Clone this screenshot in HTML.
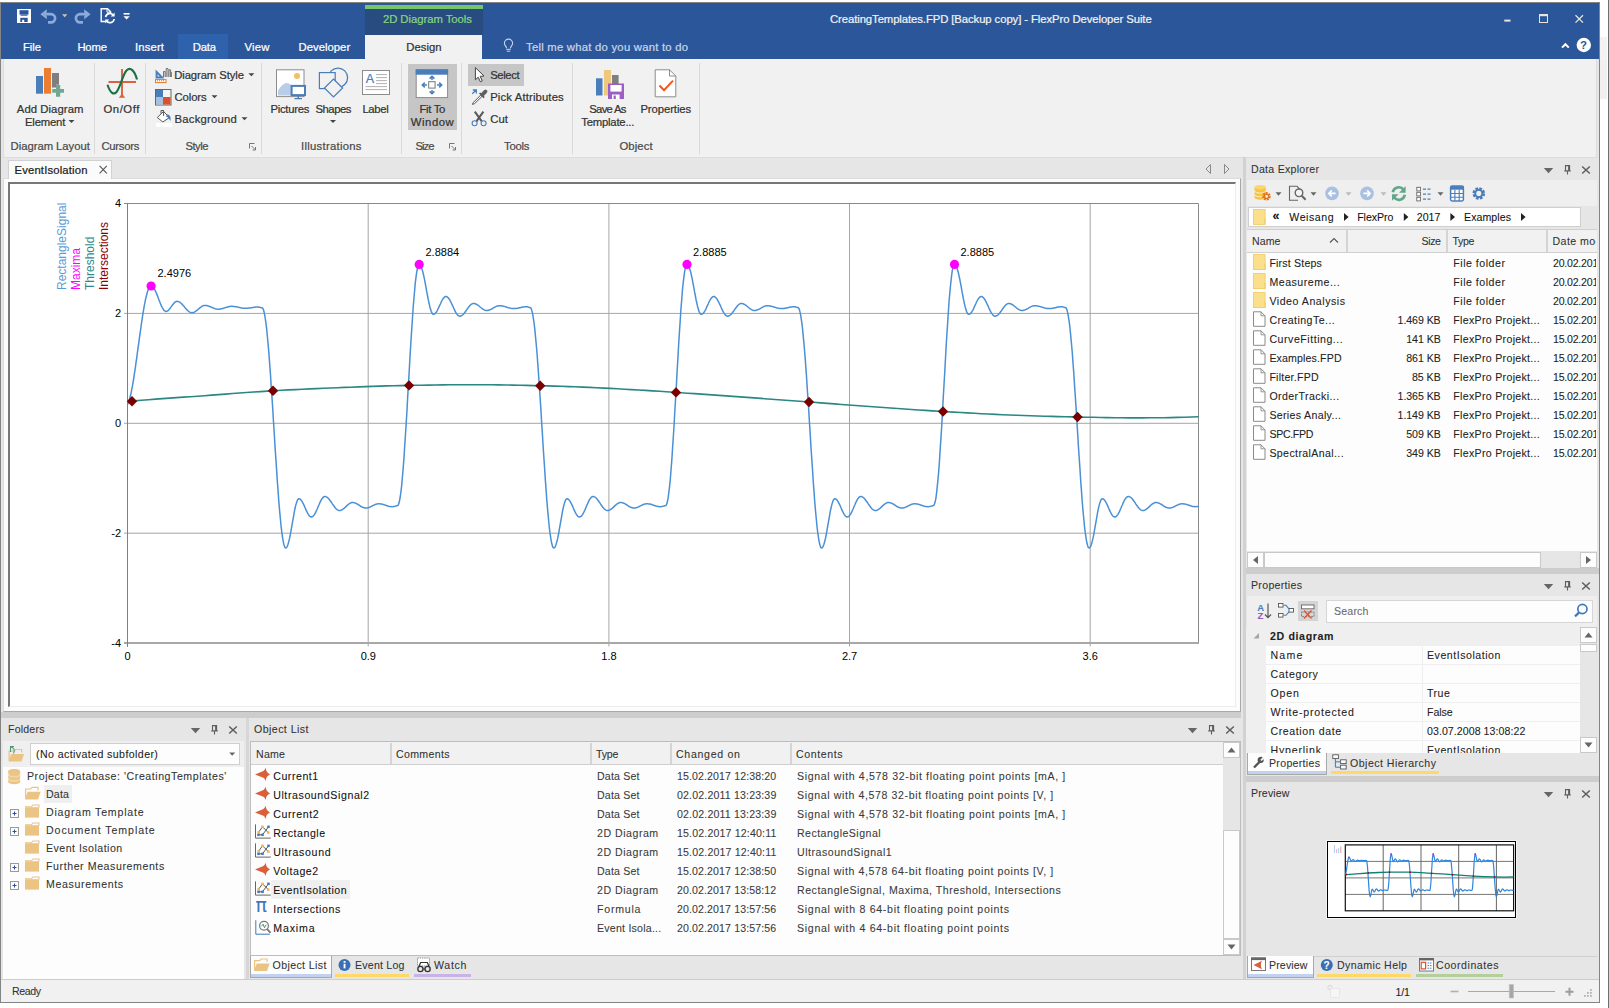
<!DOCTYPE html>
<html><head><meta charset="utf-8"><title>FlexPro</title>
<style>
html,body{margin:0;padding:0;background:#fff;}
body{width:1609px;height:1008px;position:relative;overflow:hidden;font-family:"Liberation Sans",sans-serif;}
.r{position:absolute;display:block;}
.t{position:absolute;white-space:nowrap;line-height:16px;height:16px;display:block;-webkit-text-stroke:0.22px;}
svg{overflow:visible}
</style></head><body>
<div class="r" style="left:0px;top:2px;width:1600px;height:1001px;background:#e6e6e6;border:1px solid #848484;box-sizing:border-box;"></div>
<div class="r" style="left:1px;top:3px;width:1598px;height:56px;background:#2b579a;"></div>
<div class="r" style="left:1600px;top:37px;width:7px;height:23px;background:#f3f3f3;"></div>
<div class="r" style="left:1600px;top:60px;width:7px;height:39px;background:#f0f0f0;"></div>
<div class="r" style="left:1608px;top:0px;width:1px;height:1008px;background:#6e6e6e;"></div>
<div class="r" style="left:365px;top:5px;width:118px;height:4px;background:#76c66c;"></div>
<div class="r" style="left:365px;top:9px;width:118px;height:26px;background:#284b80;"></div>
<div class="r" style="left:365px;top:35px;width:117px;height:24px;background:#f1f1f1;"></div>
<div class="r" style="left:178px;top:34px;width:50px;height:25px;background:#2f62ad;"></div>
<span class="t" style="left:23.0px;top:38.9px;font-size:11.3px;letter-spacing:-0.07px;color:#ffffff;">File</span>
<span class="t" style="left:77.4px;top:38.9px;font-size:11.3px;letter-spacing:-0.18px;color:#ffffff;">Home</span>
<span class="t" style="left:135.0px;top:38.9px;font-size:11.3px;letter-spacing:0.15px;color:#ffffff;">Insert</span>
<span class="t" style="left:192.8px;top:38.9px;font-size:11.3px;letter-spacing:-0.22px;color:#ffffff;">Data</span>
<span class="t" style="left:244.5px;top:38.9px;font-size:11.3px;letter-spacing:0.20px;color:#ffffff;">View</span>
<span class="t" style="left:298.5px;top:38.9px;font-size:11.3px;letter-spacing:0.02px;color:#ffffff;">Developer</span>
<span class="t" style="left:406.3px;top:38.9px;font-size:11.3px;letter-spacing:0.02px;color:#333;">Design</span>
<span class="t" style="left:382.9px;top:11.0px;font-size:11.3px;letter-spacing:-0.04px;color:#86d67c;">2D Diagram Tools</span>
<span class="t" style="left:526.0px;top:38.9px;font-size:11.3px;letter-spacing:0.24px;color:#c9d5ea;">Tell me what do you want to do</span>
<span class="t" style="left:830.0px;top:10.8px;font-size:11.3px;letter-spacing:-0.08px;color:#f2f2f2;">CreatingTemplates.FPD [Backup copy] - FlexPro Developer Suite</span>
<svg class="r" style="left:10px;top:4px;" width="130" height="26" viewBox="10 4 130 26"><rect x="17" y="9" width="14" height="14" fill="#fff"/><rect x="19.5" y="10.2" width="9" height="4.3" fill="#2b579a"/><path d="M20.5 14.5h7v1.2h-7z" fill="#2b579a"/><rect x="20.3" y="17.8" width="7.4" height="4.2" fill="#2b579a"/><rect x="22.2" y="19.8" width="2" height="2.3" fill="#fff"/><path d="M45 14.2H51A4.1 4.1 0 0 1 51 22.4H48" fill="none" stroke="#8eaad8" stroke-width="2.7"/><path d="M40.4 14.2L46.8 9.2V12.4L44.6 14.2L46.8 16V19.2z" fill="#8eaad8"/><path d="M62 14.3h5.4l-2.7 3z" fill="#cfc6b2"/><path d="M86 14.2H80A4.1 4.1 0 0 0 80 22.4H83" fill="none" stroke="#8eaad8" stroke-width="2.7"/><path d="M90.6 14.2L84.2 9.2V12.4L86.4 14.2L84.2 16V19.2z" fill="#8eaad8"/><path d="M105 21.5H101.2V8.7H107.5L110.6 11.8V13" fill="none" stroke="#fff" stroke-width="1.4"/><path d="M107 8.7V12.2H110.6" fill="none" stroke="#fff" stroke-width="1"/><path d="M105.6 17.2A4.3 4.3 0 0 1 113.4 15.4" fill="none" stroke="#fff" stroke-width="1.7"/><path d="M114.6 12.6V16.6H110.6z" fill="#fff"/><path d="M114.2 19A4.3 4.3 0 0 1 106.4 20.8" fill="none" stroke="#fff" stroke-width="1.7"/><path d="M105.2 23.6V19.6H109.2z" fill="#fff"/><rect x="123.6" y="13" width="6" height="1.6" fill="#fff"/><path d="M123.4 16.2h6.4l-3.2 3.2z" fill="#fff"/></svg>
<svg class="r" style="left:500px;top:10px;" width="1099" height="45" viewBox="500 10 1099 45"><rect x="1504.3" y="19.6" width="6.2" height="2" fill="#e9e5dd"/><rect x="1539.5" y="14.5" width="8" height="8" fill="none" stroke="#e9e5dd" stroke-width="1"/><rect x="1539" y="14" width="9" height="2.2" fill="#e9e5dd"/><path d="M1575.5 15.2L1583 22.6M1583 15.2L1575.5 22.6" stroke="#e9e5dd" stroke-width="1.3" fill="none"/><path d="M1562 47.6L1565.4 44.2L1568.8 47.6" stroke="#fff" stroke-width="2" fill="none"/><circle cx="1583.8" cy="45" r="7.2" fill="#fff"/><path d="M506.2 49.3h4.6M506.8 51.2h3.4" stroke="#c9d5ea" stroke-width="1"/><path d="M506.6 48.2C506.4 46.4 504.4 45.6 504.4 43.2A4.1 4.1 0 0 1 512.6 43.2C512.6 45.6 510.6 46.4 510.4 48.2" fill="none" stroke="#c9d5ea" stroke-width="1.1"/></svg>
<span class="t" style="left:1580.1px;top:37.0px;font-size:11.5px;letter-spacing:0.00px;color:#2b579a;font-weight:bold;-webkit-text-stroke:0;">?</span>
<div class="r" style="left:3px;top:59px;width:1594px;height:98.5px;background:#f1f1f1;border:1px solid #dcdcdc;border-top:none;box-sizing:border-box;"></div>
<div class="r" style="left:94px;top:63px;width:1px;height:91px;background:#d9d9d9;"></div>
<div class="r" style="left:145px;top:63px;width:1px;height:91px;background:#d9d9d9;"></div>
<div class="r" style="left:261px;top:63px;width:1px;height:91px;background:#d9d9d9;"></div>
<div class="r" style="left:401px;top:63px;width:1px;height:91px;background:#d9d9d9;"></div>
<div class="r" style="left:461px;top:63px;width:1px;height:91px;background:#d9d9d9;"></div>
<div class="r" style="left:572px;top:63px;width:1px;height:91px;background:#d9d9d9;"></div>
<div class="r" style="left:699px;top:63px;width:1px;height:91px;background:#d9d9d9;"></div>
<span class="t" style="left:10.6px;top:137.8px;font-size:11.3px;letter-spacing:-0.04px;color:#4a4a4a;">Diagram Layout</span>
<span class="t" style="left:101.5px;top:137.8px;font-size:11.3px;letter-spacing:-0.29px;color:#4a4a4a;">Cursors</span>
<span class="t" style="left:185.4px;top:137.8px;font-size:11.3px;letter-spacing:-0.48px;color:#4a4a4a;">Style</span>
<span class="t" style="left:301.0px;top:137.8px;font-size:11.3px;letter-spacing:0.28px;color:#4a4a4a;">Illustrations</span>
<span class="t" style="left:415.6px;top:137.8px;font-size:11.3px;letter-spacing:-1.03px;color:#4a4a4a;">Size</span>
<span class="t" style="left:504.0px;top:137.8px;font-size:11.3px;letter-spacing:-0.27px;color:#4a4a4a;">Tools</span>
<span class="t" style="left:619.4px;top:137.8px;font-size:11.3px;letter-spacing:0.13px;color:#4a4a4a;">Object</span>
<svg class="r" style="left:249px;top:143px;" width="8" height="8" viewBox="249 143 8 8"><path d="M249.5 148.5V143.5H254.5" fill="none" stroke="#777" stroke-width="1"/><path d="M251.5 146l3.5 3.5M255.5 147v3h-3" fill="none" stroke="#777" stroke-width="1"/></svg>
<svg class="r" style="left:449px;top:143px;" width="8" height="8" viewBox="449 143 8 8"><path d="M449.5 148.5V143.5H454.5" fill="none" stroke="#777" stroke-width="1"/><path d="M451.5 146l3.5 3.5M455.5 147v3h-3" fill="none" stroke="#777" stroke-width="1"/></svg>
<div class="r" style="left:408px;top:64px;width:49px;height:66px;background:#c6c6c6;"></div>
<div class="r" style="left:468px;top:64px;width:56px;height:22px;background:#c6c6c6;"></div>
<span class="t" style="left:16.8px;top:101.1px;font-size:11.3px;letter-spacing:0.07px;color:#333;">Add Diagram</span>
<span class="t" style="left:25.0px;top:113.8px;font-size:11.3px;letter-spacing:-0.18px;color:#333;">Element</span>
<span class="t" style="left:103.5px;top:101.1px;font-size:11.3px;letter-spacing:0.54px;color:#333;">On/Off</span>
<span class="t" style="left:174.2px;top:66.8px;font-size:11.3px;letter-spacing:-0.10px;color:#333;">Diagram Style</span>
<span class="t" style="left:174.5px;top:88.9px;font-size:11.3px;letter-spacing:-0.09px;color:#333;">Colors</span>
<span class="t" style="left:174.5px;top:110.9px;font-size:11.3px;letter-spacing:0.23px;color:#333;">Background</span>
<span class="t" style="left:270.4px;top:101.1px;font-size:11.3px;letter-spacing:-0.25px;color:#333;">Pictures</span>
<span class="t" style="left:315.4px;top:101.1px;font-size:11.3px;letter-spacing:-0.45px;color:#333;">Shapes</span>
<span class="t" style="left:362.4px;top:101.1px;font-size:11.3px;letter-spacing:-0.34px;color:#333;">Label</span>
<span class="t" style="left:419.4px;top:101.1px;font-size:11.3px;letter-spacing:-0.28px;color:#333;">Fit To</span>
<span class="t" style="left:410.7px;top:113.8px;font-size:11.3px;letter-spacing:0.58px;color:#333;">Window</span>
<span class="t" style="left:490.2px;top:66.8px;font-size:11.3px;letter-spacing:-0.40px;color:#333;">Select</span>
<span class="t" style="left:490.2px;top:88.9px;font-size:11.3px;letter-spacing:0.14px;color:#333;">Pick Attributes</span>
<span class="t" style="left:490.2px;top:110.9px;font-size:11.3px;letter-spacing:0.06px;color:#333;">Cut</span>
<span class="t" style="left:589.2px;top:101.1px;font-size:11.3px;letter-spacing:-0.69px;color:#333;">Save As</span>
<span class="t" style="left:581.2px;top:113.8px;font-size:11.3px;letter-spacing:-0.20px;color:#333;">Template...</span>
<span class="t" style="left:640.4px;top:101.1px;font-size:11.3px;letter-spacing:-0.08px;color:#333;">Properties</span>
<svg class="r" style="left:0px;top:60px;" width="700" height="96" viewBox="0 60 700 96"><path d="M68.5 120.1h6l-3 3z" fill="#444"/><path d="M248.4 73.3h6l-3 3z" fill="#444"/><path d="M211.5 95.3h6l-3 3z" fill="#444"/><path d="M241.5 117.3h6l-3 3z" fill="#444"/><path d="M330 119.9h6l-3 3z" fill="#444"/><rect x="36" y="76" width="7" height="17.7" fill="#4a7ebb"/><rect x="44" y="68" width="7" height="25.7" fill="#ed7d31"/><rect x="52" y="73" width="7" height="14.7" fill="#7f7f7f"/><path d="M52 87.7h4v-3h4v3h0v6h-8z" fill="#f1f1f1"/><path d="M56 85h4.2v4H64v3.8h-3.8v4H56v-4h-3.8V89H56z" fill="#6fa794"/><path d="M108.5 82H136M122 69V95" stroke="#dc6141" stroke-width="1.9" fill="none"/><path d="M118.8 97.8h6.4l-3.2-4.2z" fill="#dc6141"/><path d="M107.5 84.8C110 92.5 113.5 95.5 116.5 92C120.5 87 122.5 75 126.5 70.5C130.5 66.5 134.5 70.5 137 79.5" fill="none" stroke="#1e7145" stroke-width="2.1"/><path d="M155.6 69.5V78.4H164.5zM157.6 74.3V76.4H159.7z" fill="#4a7ebb" fill-rule="evenodd"/><path d="M163.5 77V71.5h1.6V77M166.2 77V68.5h1.8V77M169 77V69.8h1.6V77M171.4 77V72h0" fill="none" stroke="#666" stroke-width="0.9"/><rect x="155.5" y="79.6" width="10.5" height="3" fill="#fff" stroke="#e87722" stroke-width="1"/><path d="M157.5 80v1.4M159.5 80v1.4M161.5 80v1.4M163.5 80v1.4" stroke="#e87722" stroke-width="0.8"/><rect x="155.5" y="89.5" width="15.5" height="15.5" fill="#f4f4f4" stroke="#666" stroke-width="1"/><rect x="156" y="90" width="7" height="7" fill="#4a7ebb"/><rect x="156" y="97" width="7" height="7.5" fill="#a6c0de"/><rect x="163" y="97" width="7.5" height="7.5" fill="#d9522c"/><rect x="156" y="123" width="16" height="4" fill="#fff"/><path d="M157.3 117.5L163.5 111.5L169.5 117.5L162.8 122z" fill="#fff" stroke="#555" stroke-width="1"/><path d="M161 113.5V110.5h2.6V116" fill="none" stroke="#555" stroke-width="1"/><path d="M167 114.5C170 114.5 171.2 117 170.4 121C169 119 168.5 117.5 166 116.5z" fill="#4a7ebb"/><rect x="276.5" y="69.8" width="27.5" height="26.8" fill="#fff" stroke="#8c8c8c" stroke-width="1"/><circle cx="297" cy="76" r="3" fill="#f2c162"/><path d="M278 95.5V90.5C281 85.5 284 83 286.5 83C289 83 291.5 85 292 87V95.5z" fill="#b9cde8"/><rect x="291.6" y="85.9" width="13.4" height="9.2" fill="#fff" stroke="#4a7ebb" stroke-width="2"/><path d="M298.3 96V98.4M294.5 98.6H302" stroke="#4a7ebb" stroke-width="1.4"/><circle cx="338" cy="77.7" r="9.6" fill="#f1f1f1" stroke="#4a7ebb" stroke-width="1.3"/><rect x="319.4" y="72.6" width="15.8" height="16" fill="#f1f1f1" stroke="#4a7ebb" stroke-width="1.2"/><path d="M333.5 79L342.6 88L333.5 97L324.4 88z" fill="#f1f1f1" stroke="#4a7ebb" stroke-width="1.2"/><rect x="362.5" y="70.5" width="27" height="24" fill="#fff" stroke="#8c8c8c" stroke-width="1"/><path d="M376 74.6h11M376 77.6h11M376 80.6h11M376 83.6h11M365.5 86.6h21.5M365.5 89.6h21.5" stroke="#a8a8a8" stroke-width="0.9"/><rect x="416.2" y="69.8" width="31.4" height="27.8" fill="#fff" stroke="#8c8c8c" stroke-width="1"/><rect x="415.7" y="69.3" width="32.4" height="5.4" fill="#4a7ebb"/><rect x="428.7" y="81.7" width="6.4" height="6.4" fill="#fff" stroke="#777" stroke-width="1"/><path d="M432 80V76.5M429.6 78.6L432 76.2L434.4 78.6M432 90V93.5M429.6 91.4L432 93.8L434.4 91.4M427 85H422.5M424.8 82.6L422.3 85L424.8 87.4M437 85H441.5M439.2 82.6L441.7 85L439.2 87.4" fill="none" stroke="#4a7ebb" stroke-width="1.5"/><path d="M475.4 67.6V79.8L478.2 77.2L480.4 81.8L482.3 80.9L480.2 76.4L484 76z" fill="#fff" stroke="#444" stroke-width="1"/><path d="M481.2 94.6L473.4 102.4L472.4 104.4L474.6 103.6L482.6 95.8z" fill="#fff" stroke="#555" stroke-width="1"/><path d="M479.6 93L484.2 97.6" stroke="#555" stroke-width="1.6"/><path d="M482.4 94.6L485.4 91.6" stroke="#606060" stroke-width="3.8" stroke-linecap="round"/><path d="M472.2 93.8L476 90.2M472.8 90h3.5v3.5" fill="none" stroke="#4a7ebb" stroke-width="1.3"/><path d="M474.8 111.6L481.8 121.4M483.4 111.6L476.4 121.4" stroke="#585858" stroke-width="2"/><circle cx="474.6" cy="123.3" r="2.5" fill="none" stroke="#4a7ebb" stroke-width="1.1"/><circle cx="483.6" cy="123.3" r="2.5" fill="none" stroke="#4a7ebb" stroke-width="1.1"/><rect x="596" y="78.3" width="6.5" height="17.2" fill="#4a7ebb"/><rect x="604" y="70" width="7" height="25.5" fill="#efc77f"/><rect x="612" y="75" width="6.6" height="9" fill="#7f7f7f"/><rect x="608" y="83.5" width="16" height="15.5" fill="#9b5fc4"/><rect x="610.4" y="85" width="11.2" height="6.6" fill="#fff"/><rect x="612" y="94.5" width="7.6" height="4.5" fill="#fff"/><rect x="613.6" y="95.5" width="2.2" height="3.5" fill="#9b5fc4"/><path d="M655.2 69.8H669.5L675.8 76V96.8H655.2z" fill="#fff" stroke="#8c8c8c" stroke-width="1"/><path d="M669.5 69.8V76H675.8" fill="none" stroke="#8c8c8c" stroke-width="1"/><path d="M659.5 85.5L664 90.2L673 80.6" fill="none" stroke="#f05a1e" stroke-width="2"/></svg>
<span class="t" style="left:365.8px;top:70.5px;font-size:12.5px;letter-spacing:0.00px;color:#4a7ebb;">A</span>
<div class="r" style="left:1px;top:712px;width:1240px;height:6px;background:#cdcdcd;"></div>
<div class="r" style="left:1243px;top:157px;width:3px;height:822px;background:#d2d2d2;"></div>
<div class="r" style="left:246px;top:718px;width:3px;height:261px;background:#d6d6d6;"></div>
<div class="r" style="left:3px;top:178px;width:1238px;height:534px;background:#fcfcfc;border:1px solid #a8a8a8;border-top-color:#dcdcdc;border-left-color:#dcdcdc;box-sizing:border-box;"></div>
<div class="r" style="left:8px;top:160px;width:104px;height:19px;background:#fbfbfb;border:1px solid #d2d2d2;border-bottom:none;box-sizing:border-box;"></div>
<span class="t" style="left:14.5px;top:161.6px;font-size:11.3px;letter-spacing:0.15px;color:#222;">EventIsolation</span>
<div class="r" style="left:8px;top:182px;width:1228px;height:525px;background:#fff;border-left:2px solid #777;border-top:2px solid #777;border-right:1px solid #ececec;border-bottom:1px solid #ececec;box-sizing:border-box;"></div>
<svg class="r" style="left:90px;top:160px;" width="1150" height="18" viewBox="90 160 1150 18"><path d="M99.6 165.9L106.8 173.3M106.8 165.9L99.6 173.3" stroke="#555" stroke-width="1.1"/><path d="M1210.5 164.5V173.5L1206 169z" fill="none" stroke="#888" stroke-width="1"/><path d="M1224.5 164.5V173.5L1229 169z" fill="none" stroke="#888" stroke-width="1"/></svg>
<svg class="r" style="left:11px;top:184px;" width="1224" height="522" viewBox="11 184 1224 522"><path d="M124 313.4H1198" stroke="#a6a6a6" stroke-width="1"/><path d="M124 423.3H1198" stroke="#a6a6a6" stroke-width="1"/><path d="M124 533.2H1198" stroke="#a6a6a6" stroke-width="1"/><path d="M368.2 203V646.5" stroke="#a6a6a6" stroke-width="1"/><path d="M608.9 203V646.5" stroke="#a6a6a6" stroke-width="1"/><path d="M849.5 203V646.5" stroke="#a6a6a6" stroke-width="1"/><path d="M1090.2 203V646.5" stroke="#a6a6a6" stroke-width="1"/><path d="M124 203.5H1198.5V643" fill="none" stroke="#8a8a8a" stroke-width="1"/><path d="M124 643H1199" stroke="#a8a8a8" stroke-width="2"/><path d="M127.5 203V647" stroke="#808080" stroke-width="1"/><path id="thr" d="M127.5,401.8 L134.5,400.9 L141.5,400.3 L148.5,399.7 L155.5,399.1 L162.5,398.6 L169.5,398.1 L176.5,397.6 L183.5,397.1 L190.5,396.7 L197.5,396.2 L204.5,395.7 L211.5,395.1 L218.5,394.6 L225.5,394.1 L232.5,393.5 L239.5,393.0 L246.5,392.5 L253.5,392.0 L260.5,391.6 L267.5,391.1 L274.5,390.7 L281.5,390.3 L288.5,389.9 L295.5,389.6 L302.5,389.2 L309.5,388.9 L316.5,388.6 L323.5,388.3 L330.5,388.0 L337.5,387.7 L344.5,387.4 L351.5,387.2 L358.5,386.9 L365.5,386.6 L372.5,386.4 L379.5,386.1 L386.5,385.9 L393.5,385.7 L400.5,385.6 L407.5,385.4 L414.5,385.3 L421.5,385.2 L428.5,385.1 L435.5,385.0 L442.5,384.9 L449.5,384.8 L456.5,384.8 L463.5,384.7 L470.5,384.7 L477.5,384.7 L484.5,384.7 L491.5,384.8 L498.5,384.9 L505.5,385.0 L512.5,385.1 L519.5,385.3 L526.5,385.4 L533.5,385.6 L540.5,385.7 L547.5,385.9 L554.5,386.1 L561.5,386.3 L568.5,386.6 L575.5,386.8 L582.5,387.1 L589.5,387.4 L596.5,387.8 L603.5,388.1 L610.5,388.4 L617.5,388.8 L624.5,389.2 L631.5,389.6 L638.5,390.0 L645.5,390.4 L652.5,390.9 L659.5,391.3 L666.5,391.8 L673.5,392.2 L680.5,392.7 L687.5,393.2 L694.5,393.6 L701.5,394.1 L708.5,394.6 L715.5,395.1 L722.5,395.6 L729.5,396.1 L736.5,396.6 L743.5,397.1 L750.5,397.6 L757.5,398.1 L764.5,398.7 L771.5,399.2 L778.5,399.7 L785.5,400.2 L792.5,400.8 L799.5,401.3 L806.5,401.8 L813.5,402.3 L820.5,402.9 L827.5,403.4 L834.5,403.9 L841.5,404.5 L848.5,405.0 L855.5,405.5 L862.5,406.0 L869.5,406.5 L876.5,407.0 L883.5,407.5 L890.5,408.0 L897.5,408.5 L904.5,409.0 L911.5,409.5 L918.5,410.0 L925.5,410.4 L932.5,410.9 L939.5,411.3 L946.5,411.7 L953.5,412.1 L960.5,412.5 L967.5,412.9 L974.5,413.3 L981.5,413.7 L988.5,414.0 L995.5,414.4 L1002.5,414.7 L1009.5,415.0 L1016.5,415.2 L1023.5,415.5 L1030.5,415.7 L1037.5,416.0 L1044.5,416.2 L1051.5,416.4 L1058.5,416.6 L1065.5,416.7 L1072.5,416.9 L1079.5,417.1 L1086.5,417.2 L1093.5,417.3 L1100.5,417.5 L1107.5,417.6 L1114.5,417.7 L1121.5,417.8 L1128.5,417.9 L1135.5,417.9 L1142.5,417.9 L1149.5,417.8 L1156.5,417.8 L1163.5,417.7 L1170.5,417.6 L1177.5,417.4 L1184.5,417.2 L1191.5,417.0 L1198.5,416.8 L1198.5,416.8" fill="none" stroke="#2a8783" stroke-width="1.6"/><path id="sig" d="M127.8,404.2 L128.5,402.4 L129.3,400.2 L130.0,397.5 L130.8,394.3 L131.5,390.8 L132.3,386.8 L133.0,382.6 L133.8,378.0 L134.5,373.1 L135.3,368.0 L136.0,362.7 L136.8,357.3 L137.5,351.8 L138.3,346.2 L139.1,340.7 L139.8,335.2 L140.6,329.8 L141.3,324.5 L142.1,319.4 L142.8,314.5 L143.6,309.9 L144.3,305.7 L145.1,301.7 L145.8,298.2 L146.6,295.0 L147.3,292.3 L148.1,290.1 L148.8,288.3 L149.6,287.0 L150.3,286.3 L151.1,286.0 L151.9,286.2 L152.7,286.7 L153.5,287.5 L154.2,288.7 L155.0,290.1 L155.8,291.8 L156.6,293.6 L157.4,295.6 L158.2,297.7 L158.9,299.7 L159.7,301.8 L160.5,303.8 L161.3,305.6 L162.1,307.3 L162.9,308.7 L163.6,309.9 L164.4,310.7 L165.2,311.2 L166.0,311.4 L166.8,311.3 L167.6,310.9 L168.4,310.3 L169.1,309.5 L169.9,308.5 L170.7,307.5 L171.5,306.4 L172.3,305.2 L173.1,304.2 L173.9,303.2 L174.6,302.4 L175.4,301.8 L176.2,301.4 L177.0,301.3 L177.8,301.4 L178.5,301.6 L179.2,301.9 L180.0,302.4 L180.8,303.0 L181.5,303.6 L182.2,304.4 L183.0,305.2 L183.8,306.1 L184.5,307.0 L185.2,307.9 L186.0,308.8 L186.8,309.6 L187.5,310.4 L188.2,311.0 L189.0,311.6 L189.8,312.1 L190.5,312.4 L191.2,312.6 L192.0,312.7 L192.8,312.6 L193.5,312.5 L194.3,312.2 L195.1,311.7 L195.8,311.2 L196.6,310.7 L197.4,310.0 L198.1,309.4 L198.9,308.7 L199.6,308.1 L200.4,307.4 L201.2,306.9 L201.9,306.4 L202.7,305.9 L203.5,305.6 L204.2,305.5 L205.0,305.4 L205.8,305.4 L206.6,305.5 L207.4,305.7 L208.2,305.9 L208.9,306.2 L209.7,306.5 L210.5,306.8 L211.3,307.1 L212.1,307.5 L212.9,307.8 L213.7,308.1 L214.5,308.4 L215.2,308.7 L216.0,308.9 L216.8,309.1 L217.6,309.2 L218.4,309.2 L219.2,309.2 L220.0,309.1 L220.7,309.0 L221.5,308.8 L222.3,308.6 L223.1,308.4 L223.9,308.1 L224.7,307.9 L225.4,307.6 L226.2,307.4 L227.0,307.1 L227.8,306.9 L228.6,306.7 L229.4,306.5 L230.1,306.4 L230.9,306.3 L231.7,306.3 L232.5,306.3 L233.2,306.4 L234.0,306.4 L234.7,306.5 L235.5,306.7 L236.3,306.8 L237.0,307.0 L237.8,307.1 L238.5,307.3 L239.3,307.5 L240.1,307.6 L240.8,307.8 L241.6,307.9 L242.4,308.1 L243.1,308.2 L243.9,308.2 L244.6,308.3 L245.4,308.3 L246.2,308.3 L247.0,308.3 L247.8,308.2 L248.5,308.1 L249.3,308.0 L250.1,307.9 L250.9,307.8 L251.7,307.7 L252.5,307.5 L253.3,307.4 L254.1,307.3 L254.8,307.2 L255.6,307.1 L256.4,307.0 L257.2,307.0 L258.0,307.0 L258.8,307.1 L259.6,307.3 L260.5,307.5 L261.3,307.7 L262.1,307.8 L262.9,308.4 L263.6,310.3 L264.4,313.3 L265.1,317.5 L265.9,322.9 L266.7,329.3 L267.4,336.8 L268.2,345.2 L269.0,354.4 L269.7,364.4 L270.5,375.0 L271.2,386.2 L272.0,397.8 L272.8,409.7 L273.5,421.8 L274.3,434.0 L275.0,446.1 L275.8,458.0 L276.6,469.6 L277.3,480.8 L278.1,491.4 L278.8,501.4 L279.6,510.6 L280.4,519.0 L281.1,526.5 L281.9,532.9 L282.7,538.3 L283.4,542.5 L284.2,545.5 L284.9,547.4 L285.7,548.0 L286.5,547.6 L287.3,546.3 L288.0,544.3 L288.8,541.6 L289.6,538.2 L290.4,534.3 L291.1,530.1 L291.9,525.6 L292.7,521.1 L293.5,516.6 L294.2,512.4 L295.0,508.5 L295.8,505.1 L296.6,502.4 L297.3,500.4 L298.1,499.1 L298.9,498.7 L299.7,498.9 L300.5,499.4 L301.2,500.2 L302.0,501.4 L302.8,502.8 L303.6,504.3 L304.4,506.1 L305.1,507.8 L305.9,509.6 L306.7,511.4 L307.5,512.9 L308.3,514.3 L309.1,515.5 L309.8,516.3 L310.6,516.8 L311.4,517.0 L312.1,516.8 L312.9,516.4 L313.6,515.6 L314.4,514.6 L315.1,513.3 L315.9,511.9 L316.6,510.3 L317.4,508.5 L318.1,506.8 L318.9,505.0 L319.6,503.2 L320.4,501.6 L321.1,500.2 L321.9,498.9 L322.6,497.9 L323.4,497.1 L324.1,496.7 L324.9,496.5 L325.7,496.6 L326.4,496.9 L327.2,497.3 L328.0,498.0 L328.7,498.8 L329.5,499.7 L330.2,500.7 L331.0,501.8 L331.8,502.9 L332.5,504.1 L333.3,505.2 L334.1,506.3 L334.8,507.3 L335.6,508.2 L336.3,509.0 L337.1,509.7 L337.9,510.1 L338.6,510.4 L339.4,510.5 L340.2,510.4 L341.0,510.2 L341.7,509.9 L342.5,509.5 L343.3,508.9 L344.1,508.3 L344.9,507.6 L345.7,506.9 L346.4,506.1 L347.2,505.4 L348.0,504.7 L348.8,504.1 L349.6,503.5 L350.4,503.1 L351.1,502.8 L351.9,502.6 L352.7,502.5 L353.5,502.5 L354.2,502.7 L355.0,502.9 L355.8,503.2 L356.5,503.6 L357.3,504.0 L358.1,504.5 L358.8,505.0 L359.6,505.5 L360.3,506.0 L361.1,506.5 L361.9,506.9 L362.6,507.3 L363.4,507.6 L364.2,507.8 L364.9,508.0 L365.7,508.0 L366.5,508.0 L367.3,507.9 L368.0,507.7 L368.8,507.5 L369.6,507.2 L370.4,506.8 L371.1,506.5 L371.9,506.1 L372.7,505.7 L373.5,505.3 L374.2,505.0 L375.0,504.6 L375.8,504.3 L376.6,504.1 L377.3,503.9 L378.1,503.8 L378.9,503.8 L379.6,503.8 L380.4,503.9 L381.1,504.0 L381.9,504.1 L382.6,504.3 L383.4,504.5 L384.1,504.8 L384.9,505.0 L385.6,505.2 L386.4,505.5 L387.1,505.7 L387.9,506.0 L388.6,506.2 L389.4,506.4 L390.1,506.5 L390.9,506.6 L391.6,506.7 L392.4,506.7 L393.3,506.6 L394.1,506.4 L395.0,506.2 L395.9,505.9 L396.7,505.7 L397.6,505.6 L398.4,504.8 L399.1,502.6 L399.9,498.8 L400.7,493.7 L401.5,487.1 L402.2,479.3 L403.0,470.3 L403.8,460.2 L404.5,449.2 L405.3,437.3 L406.1,424.8 L406.9,411.8 L407.6,398.5 L408.4,385.0 L409.2,371.5 L409.9,358.2 L410.7,345.2 L411.5,332.7 L412.3,320.8 L413.0,309.8 L413.8,299.7 L414.6,290.7 L415.3,282.9 L416.1,276.3 L416.9,271.2 L417.7,267.4 L418.4,265.2 L419.2,264.4 L420.0,264.7 L420.7,265.8 L421.5,267.4 L422.2,269.7 L423.0,272.5 L423.7,275.7 L424.5,279.3 L425.2,283.2 L426.0,287.3 L426.7,291.4 L427.5,295.5 L428.2,299.4 L429.0,303.0 L429.7,306.2 L430.5,309.0 L431.2,311.3 L432.0,312.9 L432.7,314.0 L433.5,314.3 L434.3,314.1 L435.1,313.6 L435.8,312.8 L436.6,311.7 L437.4,310.3 L438.1,308.8 L438.9,307.1 L439.7,305.4 L440.5,303.7 L441.2,302.0 L442.0,300.5 L442.8,299.1 L443.6,298.0 L444.3,297.2 L445.1,296.7 L445.9,296.5 L446.7,296.6 L447.4,297.1 L448.2,297.8 L449.0,298.8 L449.8,300.0 L450.5,301.4 L451.3,303.0 L452.1,304.6 L452.9,306.3 L453.6,308.1 L454.4,309.7 L455.2,311.3 L455.9,312.7 L456.7,313.9 L457.5,314.9 L458.3,315.6 L459.0,316.1 L459.8,316.2 L460.6,316.1 L461.3,315.8 L462.1,315.3 L462.8,314.7 L463.6,313.9 L464.4,313.0 L465.1,312.0 L465.9,311.0 L466.6,309.9 L467.4,308.7 L468.2,307.7 L468.9,306.7 L469.7,305.8 L470.5,305.0 L471.2,304.4 L472.0,303.9 L472.7,303.6 L473.5,303.5 L474.3,303.6 L475.1,303.7 L475.8,304.0 L476.6,304.4 L477.4,304.9 L478.2,305.4 L479.0,306.0 L479.8,306.7 L480.5,307.3 L481.3,308.0 L482.1,308.6 L482.9,309.1 L483.7,309.6 L484.5,310.0 L485.2,310.3 L486.0,310.4 L486.8,310.5 L487.6,310.5 L488.4,310.3 L489.2,310.1 L490.0,309.8 L490.8,309.4 L491.6,309.0 L492.4,308.6 L493.1,308.1 L493.9,307.6 L494.7,307.2 L495.5,306.8 L496.3,306.4 L497.1,306.1 L497.9,305.9 L498.7,305.7 L499.5,305.7 L500.3,305.7 L501.0,305.8 L501.8,305.9 L502.5,306.0 L503.3,306.2 L504.0,306.4 L504.8,306.6 L505.5,306.8 L506.3,307.0 L507.0,307.3 L507.8,307.5 L508.5,307.7 L509.3,307.9 L510.0,308.1 L510.8,308.3 L511.5,308.4 L512.3,308.5 L513.0,308.6 L513.8,308.6 L514.6,308.6 L515.4,308.5 L516.2,308.4 L517.0,308.3 L517.8,308.2 L518.6,308.0 L519.4,307.8 L520.1,307.7 L520.9,307.5 L521.7,307.3 L522.5,307.1 L523.3,307.0 L524.1,306.9 L524.9,306.8 L525.7,306.7 L526.5,306.7 L527.4,306.8 L528.4,307.1 L529.3,307.5 L530.2,307.6 L531.0,308.2 L531.7,310.1 L532.5,313.1 L533.2,317.3 L534.0,322.7 L534.8,329.1 L535.5,336.6 L536.3,345.0 L537.1,354.2 L537.8,364.2 L538.6,374.9 L539.3,386.1 L540.1,397.7 L540.9,409.6 L541.6,421.7 L542.4,433.9 L543.1,446.0 L543.9,457.9 L544.7,469.5 L545.4,480.7 L546.2,491.4 L546.9,501.4 L547.7,510.6 L548.5,519.0 L549.2,526.5 L550.0,532.9 L550.8,538.3 L551.5,542.5 L552.3,545.5 L553.0,547.4 L553.8,548.0 L554.6,547.6 L555.4,546.3 L556.1,544.3 L556.9,541.6 L557.7,538.2 L558.5,534.3 L559.2,530.1 L560.0,525.6 L560.8,521.1 L561.6,516.6 L562.3,512.4 L563.1,508.5 L563.9,505.1 L564.7,502.4 L565.4,500.4 L566.2,499.1 L567.0,498.7 L567.8,498.9 L568.6,499.4 L569.3,500.2 L570.1,501.4 L570.9,502.8 L571.7,504.3 L572.5,506.1 L573.2,507.8 L574.0,509.6 L574.8,511.4 L575.6,512.9 L576.4,514.3 L577.2,515.5 L577.9,516.3 L578.7,516.8 L579.5,517.0 L580.2,516.8 L581.0,516.4 L581.8,515.6 L582.5,514.6 L583.2,513.3 L584.0,511.9 L584.8,510.3 L585.5,508.5 L586.2,506.8 L587.0,505.0 L587.8,503.2 L588.5,501.6 L589.2,500.2 L590.0,498.9 L590.8,497.9 L591.5,497.1 L592.2,496.7 L593.0,496.5 L593.8,496.6 L594.5,496.9 L595.3,497.3 L596.1,498.0 L596.8,498.8 L597.6,499.7 L598.3,500.7 L599.1,501.8 L599.9,502.9 L600.6,504.1 L601.4,505.2 L602.2,506.3 L602.9,507.3 L603.7,508.2 L604.4,509.0 L605.2,509.7 L606.0,510.1 L606.7,510.4 L607.5,510.5 L608.3,510.4 L609.1,510.2 L609.8,509.9 L610.6,509.5 L611.4,508.9 L612.2,508.3 L613.0,507.6 L613.8,506.9 L614.5,506.1 L615.3,505.4 L616.1,504.7 L616.9,504.1 L617.7,503.5 L618.5,503.1 L619.2,502.8 L620.0,502.6 L620.8,502.5 L621.6,502.5 L622.3,502.7 L623.1,502.9 L623.9,503.2 L624.6,503.6 L625.4,504.0 L626.2,504.5 L626.9,505.0 L627.7,505.5 L628.4,506.0 L629.2,506.5 L630.0,506.9 L630.7,507.3 L631.5,507.6 L632.3,507.8 L633.0,508.0 L633.8,508.0 L634.6,508.0 L635.4,507.9 L636.1,507.7 L636.9,507.5 L637.7,507.2 L638.5,506.8 L639.2,506.5 L640.0,506.1 L640.8,505.7 L641.6,505.3 L642.3,505.0 L643.1,504.6 L643.9,504.3 L644.7,504.1 L645.4,503.9 L646.2,503.8 L647.0,503.8 L647.8,503.8 L648.5,503.9 L649.2,504.0 L650.0,504.1 L650.8,504.3 L651.5,504.5 L652.2,504.8 L653.0,505.0 L653.8,505.2 L654.5,505.5 L655.2,505.7 L656.0,506.0 L656.8,506.2 L657.5,506.4 L658.2,506.5 L659.0,506.6 L659.8,506.7 L660.5,506.7 L661.4,506.6 L662.2,506.4 L663.1,506.2 L664.0,505.9 L664.8,505.7 L665.7,505.6 L666.5,504.8 L667.2,502.6 L668.0,498.8 L668.7,493.7 L669.5,487.1 L670.3,479.3 L671.0,470.3 L671.8,460.2 L672.5,449.2 L673.3,437.3 L674.1,424.8 L674.8,411.8 L675.6,398.5 L676.4,385.0 L677.1,371.5 L677.9,358.2 L678.6,345.2 L679.4,332.7 L680.2,320.8 L680.9,309.8 L681.7,299.7 L682.4,290.7 L683.2,282.9 L684.0,276.3 L684.7,271.2 L685.5,267.4 L686.2,265.2 L687.0,264.4 L687.8,264.7 L688.5,265.8 L689.3,267.4 L690.0,269.7 L690.8,272.5 L691.5,275.7 L692.3,279.3 L693.0,283.2 L693.8,287.3 L694.5,291.4 L695.3,295.5 L696.0,299.4 L696.8,303.0 L697.5,306.2 L698.3,309.0 L699.0,311.3 L699.8,312.9 L700.5,314.0 L701.3,314.3 L702.1,314.1 L702.8,313.6 L703.6,312.8 L704.4,311.7 L705.2,310.3 L706.0,308.8 L706.7,307.1 L707.5,305.4 L708.3,303.7 L709.0,302.0 L709.8,300.5 L710.6,299.1 L711.4,298.0 L712.2,297.2 L712.9,296.7 L713.7,296.5 L714.5,296.6 L715.2,297.1 L716.0,297.8 L716.8,298.8 L717.6,300.0 L718.3,301.4 L719.1,303.0 L719.9,304.6 L720.7,306.3 L721.4,308.1 L722.2,309.7 L723.0,311.3 L723.7,312.7 L724.5,313.9 L725.3,314.9 L726.1,315.6 L726.8,316.1 L727.6,316.2 L728.4,316.1 L729.1,315.8 L729.9,315.3 L730.6,314.7 L731.4,313.9 L732.2,313.0 L732.9,312.0 L733.7,311.0 L734.5,309.9 L735.2,308.7 L736.0,307.7 L736.7,306.7 L737.5,305.8 L738.3,305.0 L739.0,304.4 L739.8,303.9 L740.5,303.6 L741.3,303.5 L742.1,303.6 L742.9,303.7 L743.6,304.0 L744.4,304.4 L745.2,304.9 L746.0,305.4 L746.8,306.0 L747.6,306.7 L748.3,307.3 L749.1,308.0 L749.9,308.6 L750.7,309.1 L751.5,309.6 L752.3,310.0 L753.0,310.3 L753.8,310.4 L754.6,310.5 L755.4,310.5 L756.2,310.3 L757.0,310.1 L757.8,309.8 L758.6,309.4 L759.4,309.0 L760.2,308.6 L761.0,308.1 L761.7,307.6 L762.5,307.2 L763.3,306.8 L764.1,306.4 L764.9,306.1 L765.7,305.9 L766.5,305.7 L767.3,305.7 L768.1,305.7 L768.8,305.8 L769.6,305.9 L770.3,306.0 L771.1,306.2 L771.8,306.4 L772.6,306.6 L773.3,306.8 L774.1,307.0 L774.8,307.3 L775.6,307.5 L776.3,307.7 L777.1,307.9 L777.8,308.1 L778.6,308.3 L779.3,308.4 L780.1,308.5 L780.8,308.6 L781.6,308.6 L782.4,308.6 L783.2,308.5 L784.0,308.4 L784.8,308.3 L785.6,308.2 L786.4,308.0 L787.2,307.8 L788.0,307.7 L788.7,307.5 L789.5,307.3 L790.3,307.1 L791.1,307.0 L791.9,306.9 L792.7,306.8 L793.5,306.7 L794.3,306.7 L795.2,306.8 L796.1,307.1 L797.1,307.5 L798.0,307.6 L798.8,308.2 L799.5,310.1 L800.3,313.1 L801.0,317.3 L801.8,322.7 L802.6,329.1 L803.3,336.6 L804.1,345.0 L804.9,354.2 L805.6,364.2 L806.4,374.9 L807.1,386.1 L807.9,397.7 L808.7,409.6 L809.4,421.7 L810.2,433.9 L810.9,446.0 L811.7,457.9 L812.5,469.5 L813.2,480.7 L814.0,491.4 L814.7,501.4 L815.5,510.6 L816.3,519.0 L817.0,526.5 L817.8,532.9 L818.6,538.3 L819.3,542.5 L820.1,545.5 L820.8,547.4 L821.6,548.0 L822.4,547.6 L823.2,546.3 L823.9,544.3 L824.7,541.6 L825.5,538.2 L826.3,534.3 L827.0,530.1 L827.8,525.6 L828.6,521.1 L829.4,516.6 L830.1,512.4 L830.9,508.5 L831.7,505.1 L832.5,502.4 L833.2,500.4 L834.0,499.1 L834.8,498.7 L835.6,498.9 L836.4,499.4 L837.1,500.2 L837.9,501.4 L838.7,502.8 L839.5,504.3 L840.3,506.1 L841.0,507.8 L841.8,509.6 L842.6,511.4 L843.4,512.9 L844.2,514.3 L845.0,515.5 L845.7,516.3 L846.5,516.8 L847.3,517.0 L848.0,516.8 L848.8,516.4 L849.5,515.6 L850.3,514.6 L851.0,513.3 L851.8,511.9 L852.5,510.3 L853.3,508.5 L854.0,506.8 L854.8,505.0 L855.5,503.2 L856.3,501.6 L857.0,500.2 L857.8,498.9 L858.5,497.9 L859.3,497.1 L860.0,496.7 L860.8,496.5 L861.6,496.6 L862.3,496.9 L863.1,497.3 L863.9,498.0 L864.6,498.8 L865.4,499.7 L866.1,500.7 L866.9,501.8 L867.7,502.9 L868.4,504.1 L869.2,505.2 L870.0,506.3 L870.7,507.3 L871.5,508.2 L872.2,509.0 L873.0,509.7 L873.8,510.1 L874.5,510.4 L875.3,510.5 L876.1,510.4 L876.9,510.2 L877.6,509.9 L878.4,509.5 L879.2,508.9 L880.0,508.3 L880.8,507.6 L881.6,506.9 L882.3,506.1 L883.1,505.4 L883.9,504.7 L884.7,504.1 L885.5,503.5 L886.3,503.1 L887.0,502.8 L887.8,502.6 L888.6,502.5 L889.4,502.5 L890.1,502.7 L890.9,502.9 L891.7,503.2 L892.4,503.6 L893.2,504.0 L894.0,504.5 L894.7,505.0 L895.5,505.5 L896.2,506.0 L897.0,506.5 L897.8,506.9 L898.5,507.3 L899.3,507.6 L900.1,507.8 L900.8,508.0 L901.6,508.0 L902.4,508.0 L903.2,507.9 L903.9,507.7 L904.7,507.5 L905.5,507.2 L906.3,506.8 L907.0,506.5 L907.8,506.1 L908.6,505.7 L909.4,505.3 L910.1,505.0 L910.9,504.6 L911.7,504.3 L912.5,504.1 L913.2,503.9 L914.0,503.8 L914.8,503.8 L915.5,503.8 L916.3,503.9 L917.0,504.0 L917.8,504.1 L918.5,504.3 L919.3,504.5 L920.0,504.8 L920.8,505.0 L921.5,505.2 L922.3,505.5 L923.0,505.7 L923.8,506.0 L924.5,506.2 L925.3,506.4 L926.0,506.5 L926.8,506.6 L927.5,506.7 L928.3,506.7 L929.2,506.6 L930.0,506.4 L930.9,506.2 L931.8,505.9 L932.6,505.7 L933.5,505.6 L934.2,504.8 L935.0,502.6 L935.8,498.8 L936.5,493.7 L937.2,487.1 L938.0,479.3 L938.8,470.3 L939.5,460.2 L940.2,449.2 L941.0,437.3 L941.8,424.8 L942.5,411.8 L943.2,398.5 L944.0,385.0 L944.8,371.5 L945.5,358.2 L946.2,345.2 L947.0,332.7 L947.8,320.8 L948.5,309.8 L949.2,299.7 L950.0,290.7 L950.8,282.9 L951.5,276.3 L952.2,271.2 L953.0,267.4 L953.8,265.2 L954.5,264.4 L955.3,264.7 L956.0,265.8 L956.8,267.4 L957.5,269.7 L958.3,272.5 L959.0,275.7 L959.8,279.3 L960.5,283.2 L961.3,287.3 L962.0,291.4 L962.8,295.5 L963.5,299.4 L964.3,303.0 L965.0,306.2 L965.8,309.0 L966.5,311.3 L967.3,312.9 L968.0,314.0 L968.8,314.3 L969.6,314.1 L970.3,313.6 L971.1,312.8 L971.9,311.7 L972.7,310.3 L973.5,308.8 L974.2,307.1 L975.0,305.4 L975.8,303.7 L976.5,302.0 L977.3,300.5 L978.1,299.1 L978.9,298.0 L979.7,297.2 L980.4,296.7 L981.2,296.5 L982.0,296.6 L982.7,297.1 L983.5,297.8 L984.3,298.8 L985.1,300.0 L985.8,301.4 L986.6,303.0 L987.4,304.6 L988.2,306.3 L988.9,308.1 L989.7,309.7 L990.5,311.3 L991.2,312.7 L992.0,313.9 L992.8,314.9 L993.6,315.6 L994.3,316.1 L995.1,316.2 L995.9,316.1 L996.6,315.8 L997.4,315.3 L998.1,314.7 L998.9,313.9 L999.7,313.0 L1000.4,312.0 L1001.2,311.0 L1002.0,309.9 L1002.7,308.7 L1003.5,307.7 L1004.2,306.7 L1005.0,305.8 L1005.8,305.0 L1006.5,304.4 L1007.3,303.9 L1008.0,303.6 L1008.8,303.5 L1009.6,303.6 L1010.4,303.7 L1011.1,304.0 L1011.9,304.4 L1012.7,304.9 L1013.5,305.4 L1014.3,306.0 L1015.1,306.7 L1015.8,307.3 L1016.6,308.0 L1017.4,308.6 L1018.2,309.1 L1019.0,309.6 L1019.8,310.0 L1020.5,310.3 L1021.3,310.4 L1022.1,310.5 L1022.9,310.5 L1023.7,310.3 L1024.5,310.1 L1025.3,309.8 L1026.1,309.4 L1026.9,309.0 L1027.7,308.6 L1028.5,308.1 L1029.2,307.6 L1030.0,307.2 L1030.8,306.8 L1031.6,306.4 L1032.4,306.1 L1033.2,305.9 L1034.0,305.7 L1034.8,305.7 L1035.6,305.7 L1036.3,305.8 L1037.1,305.9 L1037.8,306.0 L1038.6,306.2 L1039.3,306.4 L1040.1,306.6 L1040.8,306.8 L1041.6,307.0 L1042.3,307.3 L1043.1,307.5 L1043.8,307.7 L1044.6,307.9 L1045.3,308.1 L1046.1,308.3 L1046.8,308.4 L1047.6,308.5 L1048.3,308.6 L1049.1,308.6 L1049.9,308.6 L1050.7,308.5 L1051.5,308.4 L1052.3,308.3 L1053.1,308.2 L1053.9,308.0 L1054.7,307.8 L1055.4,307.7 L1056.2,307.5 L1057.0,307.3 L1057.8,307.1 L1058.6,307.0 L1059.4,306.9 L1060.2,306.8 L1061.0,306.7 L1061.8,306.7 L1062.7,306.8 L1063.7,307.1 L1064.6,307.5 L1065.5,307.6 L1066.3,308.2 L1067.0,310.1 L1067.8,313.1 L1068.5,317.3 L1069.3,322.7 L1070.1,329.1 L1070.8,336.6 L1071.6,345.0 L1072.4,354.2 L1073.1,364.2 L1073.9,374.9 L1074.6,386.1 L1075.4,397.7 L1076.2,409.6 L1076.9,421.7 L1077.7,433.9 L1078.4,446.0 L1079.2,457.9 L1080.0,469.5 L1080.7,480.7 L1081.5,491.4 L1082.2,501.4 L1083.0,510.6 L1083.8,519.0 L1084.5,526.5 L1085.3,532.9 L1086.1,538.3 L1086.8,542.5 L1087.6,545.5 L1088.3,547.4 L1089.1,548.0 L1089.9,547.6 L1090.7,546.3 L1091.4,544.3 L1092.2,541.6 L1093.0,538.2 L1093.8,534.3 L1094.5,530.1 L1095.3,525.6 L1096.1,521.1 L1096.9,516.6 L1097.6,512.4 L1098.4,508.5 L1099.2,505.1 L1100.0,502.4 L1100.7,500.4 L1101.5,499.1 L1102.3,498.7 L1103.1,498.9 L1103.9,499.4 L1104.6,500.2 L1105.4,501.4 L1106.2,502.8 L1107.0,504.3 L1107.8,506.1 L1108.5,507.8 L1109.3,509.6 L1110.1,511.4 L1110.9,512.9 L1111.7,514.3 L1112.5,515.5 L1113.2,516.3 L1114.0,516.8 L1114.8,517.0 L1115.5,516.8 L1116.3,516.4 L1117.0,515.6 L1117.8,514.6 L1118.5,513.3 L1119.3,511.9 L1120.0,510.3 L1120.8,508.5 L1121.5,506.8 L1122.3,505.0 L1123.0,503.2 L1123.8,501.6 L1124.5,500.2 L1125.3,498.9 L1126.0,497.9 L1126.8,497.1 L1127.5,496.7 L1128.3,496.5 L1129.1,496.6 L1129.8,496.9 L1130.6,497.3 L1131.4,498.0 L1132.1,498.8 L1132.9,499.7 L1133.6,500.7 L1134.4,501.8 L1135.2,502.9 L1135.9,504.1 L1136.7,505.2 L1137.5,506.3 L1138.2,507.3 L1139.0,508.2 L1139.7,509.0 L1140.5,509.7 L1141.3,510.1 L1142.0,510.4 L1142.8,510.5 L1143.6,510.4 L1144.4,510.2 L1145.1,509.9 L1145.9,509.5 L1146.7,508.9 L1147.5,508.3 L1148.3,507.6 L1149.1,506.9 L1149.8,506.1 L1150.6,505.4 L1151.4,504.7 L1152.2,504.1 L1153.0,503.5 L1153.8,503.1 L1154.5,502.8 L1155.3,502.6 L1156.1,502.5 L1156.9,502.5 L1157.6,502.7 L1158.4,502.9 L1159.2,503.2 L1159.9,503.6 L1160.7,504.0 L1161.5,504.5 L1162.2,505.0 L1163.0,505.5 L1163.7,506.0 L1164.5,506.5 L1165.3,506.9 L1166.0,507.3 L1166.8,507.6 L1167.6,507.8 L1168.3,508.0 L1169.1,508.0 L1169.9,508.0 L1170.7,507.9 L1171.4,507.7 L1172.2,507.5 L1173.0,507.2 L1173.8,506.8 L1174.5,506.5 L1175.3,506.1 L1176.1,505.7 L1176.9,505.3 L1177.6,505.0 L1178.4,504.6 L1179.2,504.3 L1180.0,504.1 L1180.7,503.9 L1181.5,503.8 L1182.3,503.8 L1183.0,503.8 L1183.8,503.9 L1184.5,504.0 L1185.3,504.1 L1186.0,504.3 L1186.8,504.5 L1187.5,504.8 L1188.3,505.0 L1189.0,505.2 L1189.8,505.5 L1190.5,505.7 L1191.3,506.0 L1192.0,506.2 L1192.8,506.4 L1193.5,506.5 L1194.3,506.6 L1195.0,506.7 L1195.8,506.7 L1196.7,506.6 L1197.5,506.4 L1198.4,506.2" fill="none" stroke="#4a90d6" stroke-width="1.5" stroke-linejoin="round"/><path d="M132 396l5.2 5.2l-5.2 5.2l-5.2 -5.2z" fill="#7a0000"/><path d="M273 385.6l5.2 5.2l-5.2 5.2l-5.2 -5.2z" fill="#7a0000"/><path d="M409 380.2l5.2 5.2l-5.2 5.2l-5.2 -5.2z" fill="#7a0000"/><path d="M540.2 380.5l5.2 5.2l-5.2 5.2l-5.2 -5.2z" fill="#7a0000"/><path d="M676 387.2l5.2 5.2l-5.2 5.2l-5.2 -5.2z" fill="#7a0000"/><path d="M809 396.8l5.2 5.2l-5.2 5.2l-5.2 -5.2z" fill="#7a0000"/><path d="M943 406.3l5.2 5.2l-5.2 5.2l-5.2 -5.2z" fill="#7a0000"/><path d="M1077.5 411.8l5.2 5.2l-5.2 5.2l-5.2 -5.2z" fill="#7a0000"/><circle cx="151.1" cy="286" r="4.6" fill="#ff00ff"/><circle cx="419.2" cy="264.4" r="4.6" fill="#ff00ff"/><circle cx="687" cy="264.4" r="4.6" fill="#ff00ff"/><circle cx="954.5" cy="264.4" r="4.6" fill="#ff00ff"/><text x="121" y="207.1" text-anchor="end" font-family="Liberation Sans, sans-serif" font-size="11" fill="#000">4</text><text x="121" y="317.1" text-anchor="end" font-family="Liberation Sans, sans-serif" font-size="11" fill="#000">2</text><text x="121" y="427.1" text-anchor="end" font-family="Liberation Sans, sans-serif" font-size="11" fill="#000">0</text><text x="121" y="537.1" text-anchor="end" font-family="Liberation Sans, sans-serif" font-size="11" fill="#000">-2</text><text x="121" y="646.6" text-anchor="end" font-family="Liberation Sans, sans-serif" font-size="11" fill="#000">-4</text><text x="127.6" y="659.5" text-anchor="middle" font-family="Liberation Sans, sans-serif" font-size="11" fill="#000">0</text><text x="368.3" y="659.5" text-anchor="middle" font-family="Liberation Sans, sans-serif" font-size="11" fill="#000">0.9</text><text x="609" y="659.5" text-anchor="middle" font-family="Liberation Sans, sans-serif" font-size="11" fill="#000">1.8</text><text x="849.6" y="659.5" text-anchor="middle" font-family="Liberation Sans, sans-serif" font-size="11" fill="#000">2.7</text><text x="1090.2" y="659.5" text-anchor="middle" font-family="Liberation Sans, sans-serif" font-size="11" fill="#000">3.6</text><text x="157.5" y="277" font-family="Liberation Sans, sans-serif" font-size="11" fill="#000">2.4976</text><text x="425.5" y="255.5" font-family="Liberation Sans, sans-serif" font-size="11" fill="#000">2.8884</text><text x="693" y="255.5" font-family="Liberation Sans, sans-serif" font-size="11" fill="#000">2.8885</text><text x="960.5" y="255.5" font-family="Liberation Sans, sans-serif" font-size="11" fill="#000">2.8885</text><text transform="translate(66 290) rotate(-90)" font-family="Liberation Sans, sans-serif" font-size="12" fill="#5b9bd5">RectangleSignal</text><text transform="translate(80 290) rotate(-90)" font-family="Liberation Sans, sans-serif" font-size="12" fill="#ff00ff">Maxima</text><text transform="translate(94 290) rotate(-90)" font-family="Liberation Sans, sans-serif" font-size="12" fill="#2e8b8b">Threshold</text><text transform="translate(108 290) rotate(-90)" font-family="Liberation Sans, sans-serif" font-size="12" fill="#8b0000">Intersections</text></svg>
<div class="r" style="left:1247px;top:180px;width:350px;height:26px;background:#efefef;"></div>
<span class="t" style="left:1251.0px;top:161.2px;font-size:10.6px;letter-spacing:0.27px;color:#333;-webkit-text-stroke:0.08px;">Data Explorer</span>
<svg class="r" style="left:1541px;top:161.5px;" width="52" height="16" viewBox="1541 161.5 52 16"><path d="M1582.2 166L1589.8 173M1589.8 166L1582.2 173" stroke="#5e5e5e" stroke-width="1.5"/><path d="M1565.5 165.1h4v5.2h-4zM1564.1 170.5h6.8M1567.5 170.5v3.6" fill="none" stroke="#5e5e5e" stroke-width="1.1"/><path d="M1569.1 165.1v5.2" stroke="#5e5e5e" stroke-width="2"/><path d="M1543.8 167.5h9.4l-4.7 5.2z" fill="#666"/></svg>
<svg class="r" style="left:1250px;top:182px;" width="240" height="22" viewBox="1250 182 240 22"><g transform="translate(0 0.8)"><path d="M1254.6 186.4V196.6A5.6 2.3 0 0 0 1265.8 196.6V186.4z" fill="#f6c343"/><ellipse cx="1260.2" cy="186.4" rx="5.6" ry="2.3" fill="#fbd765"/><path d="M1254.6 190A5.6 2.3 0 0 0 1265.8 190" fill="none" stroke="#fdf0c4" stroke-width="1"/><path d="M1254.6 193.6A5.6 2.3 0 0 0 1265.8 193.6" fill="none" stroke="#fdf0c4" stroke-width="1"/><circle cx="1266.5" cy="195.5" r="3.2" fill="none" stroke="#e2741c" stroke-width="2.2" stroke-dasharray="1.8 1"/><circle cx="1266.5" cy="195.5" r="2.2" fill="none" stroke="#e2741c" stroke-width="1.4"/><path d="M1275.5 191.5h6l-3 3.4z" fill="#666"/><path d="M1310.5 191.5h6l-3 3.4z" fill="#666"/><path d="M1345.5 191.5h6l-3 3.4z" fill="#bbb"/><path d="M1380.5 191.5h6l-3 3.4z" fill="#bbb"/><path d="M1437.5 191.5h6l-3 3.4z" fill="#666"/><path d="M1298 199.5H1289.5V185.5H1297L1300.5 189" fill="none" stroke="#666" stroke-width="1.1"/><circle cx="1299" cy="192" r="3.8" fill="#f4f4f4" stroke="#666" stroke-width="1.4"/><path d="M1301.8 195L1305.6 199" stroke="#666" stroke-width="2"/><circle cx="1332" cy="192.6" r="6.8" fill="#a9c0e0"/><path d="M1335.6 192.6H1329M1331.8 189.6L1328.8 192.6L1331.8 195.6" fill="none" stroke="#fff" stroke-width="1.6"/><circle cx="1367" cy="192.6" r="6.8" fill="#a9c0e0"/><path d="M1363.4 192.6H1370M1367.2 189.6L1370.2 192.6L1367.2 195.6" fill="none" stroke="#fff" stroke-width="1.6"/><path d="M1392.8 191.5A6 6 0 0 1 1403.6 189" fill="none" stroke="#62a68b" stroke-width="2.6"/><path d="M1405.6 185.5V192H1399z" fill="#62a68b"/><path d="M1404.8 194A6 6 0 0 1 1394 196.5" fill="none" stroke="#62a68b" stroke-width="2.6"/><path d="M1392 200V193.5H1398.6z" fill="#62a68b"/><rect x="1416.8" y="186.5" width="3.6" height="3.6" fill="#fff" stroke="#666" stroke-width="0.9"/><path d="M1423 188.3h3M1427.5 188.3h3" stroke="#4a7ebb" stroke-width="1.2"/><rect x="1416.8" y="191.5" width="3.6" height="3.6" fill="#fff" stroke="#666" stroke-width="0.9"/><path d="M1423 193.3h3M1427.5 193.3h3" stroke="#4a7ebb" stroke-width="1.2"/><rect x="1416.8" y="196.5" width="3.6" height="3.6" fill="#fff" stroke="#666" stroke-width="0.9"/><path d="M1423 198.3h3M1427.5 198.3h3" stroke="#4a7ebb" stroke-width="1.2"/><rect x="1450.6" y="185.3" width="12.8" height="14.8" rx="1.6" fill="#fff" stroke="#4a7ebb" stroke-width="1.5"/><rect x="1450.6" y="185.3" width="12.8" height="3.6" fill="#4a7ebb"/><path d="M1454.9 189V200M1459.2 189V200M1451 192.7H1463M1451 196.4H1463" stroke="#4a7ebb" stroke-width="1.1"/><circle cx="1478.8" cy="192.6" r="4.6" fill="none" stroke="#4a7ebb" stroke-width="3.4" stroke-dasharray="2.4 1.2"/><circle cx="1478.8" cy="192.6" r="3.6" fill="none" stroke="#4a7ebb" stroke-width="2"/></g></svg>
<div class="r" style="left:1248px;top:207px;width:333px;height:20px;background:#fff;border:1px solid #cfcfcf;box-sizing:border-box;"></div>
<svg class="r" style="left:1250px;top:208px;" width="300" height="18" viewBox="1250 208 300 18"><rect x="1253.5" y="209.4" width="11.6" height="15" fill="#fbe08c" stroke="#efc95e" stroke-width="0.8"/><path d="M1265.1 224.4v-5.4h-1.6" fill="none" stroke="#efc95e" stroke-width="0.8"/><path d="M1344 213v8l4.6 -4z" fill="#222"/><path d="M1403.8 213v8l4.6 -4z" fill="#222"/><path d="M1450.4 213v8l4.6 -4z" fill="#222"/><path d="M1521 213v8l4.6 -4z" fill="#222"/></svg>
<span class="t" style="left:1272.5px;top:207.8px;font-size:12.5px;letter-spacing:0.00px;color:#111;font-weight:bold;-webkit-text-stroke:0;-webkit-text-stroke:0.08px;">«</span>
<span class="t" style="left:1289.3px;top:209.2px;font-size:10.6px;letter-spacing:0.54px;color:#111;-webkit-text-stroke:0.08px;">Weisang</span>
<span class="t" style="left:1357.2px;top:209.2px;font-size:10.6px;letter-spacing:-0.05px;color:#111;-webkit-text-stroke:0.08px;">FlexPro</span>
<span class="t" style="left:1416.7px;top:209.2px;font-size:10.6px;letter-spacing:0.07px;color:#111;-webkit-text-stroke:0.08px;">2017</span>
<span class="t" style="left:1464.0px;top:209.2px;font-size:10.6px;letter-spacing:0.07px;color:#111;-webkit-text-stroke:0.08px;">Examples</span>
<div class="r" style="left:1247px;top:229px;width:350px;height:24px;background:#f1f1f1;border-top:1px solid #d0d0d0;border-bottom:1px solid #d0d0d0;box-sizing:border-box;"></div>
<div class="r" style="left:1346px;top:230px;width:2px;height:22px;background:#d4d4d4;"></div>
<div class="r" style="left:1446px;top:230px;width:2px;height:22px;background:#d4d4d4;"></div>
<div class="r" style="left:1546px;top:230px;width:2px;height:22px;background:#d4d4d4;"></div>
<span class="t" style="left:1252.0px;top:233.3px;font-size:10.6px;letter-spacing:0.07px;color:#333;-webkit-text-stroke:0.08px;">Name</span>
<span class="t" style="left:1421.5px;top:233.3px;font-size:10.6px;letter-spacing:-0.37px;color:#333;-webkit-text-stroke:0.08px;">Size</span>
<span class="t" style="left:1452.5px;top:233.3px;font-size:10.6px;letter-spacing:-0.33px;color:#333;-webkit-text-stroke:0.08px;">Type</span>
<div class="r" style="left:1552px;top:229px;width:44px;height:23px;overflow:hidden">
<span class="t" style="left:0.5px;top:4.3px;font-size:10.6px;letter-spacing:0.43px;color:#333;-webkit-text-stroke:0.08px;">Date mod</span>
</div>
<svg class="r" style="left:1328px;top:236px;" width="12" height="8" viewBox="1328 236 12 8"><path d="M1330 242.5L1334 238.5L1338 242.5" fill="none" stroke="#555" stroke-width="1.1"/></svg>
<div class="r" style="left:1247px;top:253px;width:350px;height:298px;background:#fdfdfd;"></div>
<span class="t" style="left:1269.4px;top:255.1px;font-size:10.6px;letter-spacing:0.18px;color:#222;-webkit-text-stroke:0.08px;">First Steps</span>
<span class="t" style="left:1453.3px;top:255.1px;font-size:10.6px;letter-spacing:0.51px;color:#222;-webkit-text-stroke:0.08px;">File folder</span>
<div class="r" style="left:1552px;top:254.2px;width:44px;height:18px;overflow:hidden">
<span class="t" style="left:1.0px;top:0.9px;font-size:10.6px;letter-spacing:-0.23px;color:#222;-webkit-text-stroke:0.08px;">20.02.2017</span>
</div>
<span class="t" style="left:1269.4px;top:274.1px;font-size:10.6px;letter-spacing:0.51px;color:#222;-webkit-text-stroke:0.08px;">Measureme...</span>
<span class="t" style="left:1453.3px;top:274.1px;font-size:10.6px;letter-spacing:0.51px;color:#222;-webkit-text-stroke:0.08px;">File folder</span>
<div class="r" style="left:1552px;top:273.2px;width:44px;height:18px;overflow:hidden">
<span class="t" style="left:1.0px;top:0.9px;font-size:10.6px;letter-spacing:-0.23px;color:#222;-webkit-text-stroke:0.08px;">20.02.2017</span>
</div>
<span class="t" style="left:1269.4px;top:293.1px;font-size:10.6px;letter-spacing:0.53px;color:#222;-webkit-text-stroke:0.08px;">Video Analysis</span>
<span class="t" style="left:1453.3px;top:293.1px;font-size:10.6px;letter-spacing:0.51px;color:#222;-webkit-text-stroke:0.08px;">File folder</span>
<div class="r" style="left:1552px;top:292.2px;width:44px;height:18px;overflow:hidden">
<span class="t" style="left:1.0px;top:0.9px;font-size:10.6px;letter-spacing:-0.23px;color:#222;-webkit-text-stroke:0.08px;">20.02.2017</span>
</div>
<span class="t" style="left:1269.4px;top:312.1px;font-size:10.6px;letter-spacing:0.44px;color:#222;-webkit-text-stroke:0.08px;">CreatingTe...</span>
<span class="t" style="left:1397.6px;top:312.1px;font-size:10.6px;letter-spacing:-0.07px;color:#222;-webkit-text-stroke:0.08px;">1.469 KB</span>
<span class="t" style="left:1453.3px;top:312.1px;font-size:10.6px;letter-spacing:0.31px;color:#222;-webkit-text-stroke:0.08px;">FlexPro Projekt...</span>
<div class="r" style="left:1552px;top:311.2px;width:44px;height:18px;overflow:hidden">
<span class="t" style="left:1.0px;top:0.9px;font-size:10.6px;letter-spacing:-0.23px;color:#222;-webkit-text-stroke:0.08px;">15.02.2017</span>
</div>
<span class="t" style="left:1269.4px;top:331.1px;font-size:10.6px;letter-spacing:0.53px;color:#222;-webkit-text-stroke:0.08px;">CurveFitting...</span>
<span class="t" style="left:1406.3px;top:331.1px;font-size:10.6px;letter-spacing:-0.07px;color:#222;-webkit-text-stroke:0.08px;">141 KB</span>
<span class="t" style="left:1453.3px;top:331.1px;font-size:10.6px;letter-spacing:0.31px;color:#222;-webkit-text-stroke:0.08px;">FlexPro Projekt...</span>
<div class="r" style="left:1552px;top:330.2px;width:44px;height:18px;overflow:hidden">
<span class="t" style="left:1.0px;top:0.9px;font-size:10.6px;letter-spacing:-0.23px;color:#222;-webkit-text-stroke:0.08px;">15.02.2017</span>
</div>
<span class="t" style="left:1269.4px;top:350.1px;font-size:10.6px;letter-spacing:0.14px;color:#222;-webkit-text-stroke:0.08px;">Examples.FPD</span>
<span class="t" style="left:1406.3px;top:350.1px;font-size:10.6px;letter-spacing:-0.07px;color:#222;-webkit-text-stroke:0.08px;">861 KB</span>
<span class="t" style="left:1453.3px;top:350.1px;font-size:10.6px;letter-spacing:0.31px;color:#222;-webkit-text-stroke:0.08px;">FlexPro Projekt...</span>
<div class="r" style="left:1552px;top:349.2px;width:44px;height:18px;overflow:hidden">
<span class="t" style="left:1.0px;top:0.9px;font-size:10.6px;letter-spacing:-0.23px;color:#222;-webkit-text-stroke:0.08px;">15.02.2017</span>
</div>
<span class="t" style="left:1269.4px;top:369.1px;font-size:10.6px;letter-spacing:0.24px;color:#222;-webkit-text-stroke:0.08px;">Filter.FPD</span>
<span class="t" style="left:1412.0px;top:369.1px;font-size:10.6px;letter-spacing:-0.04px;color:#222;-webkit-text-stroke:0.08px;">85 KB</span>
<span class="t" style="left:1453.3px;top:369.1px;font-size:10.6px;letter-spacing:0.31px;color:#222;-webkit-text-stroke:0.08px;">FlexPro Projekt...</span>
<div class="r" style="left:1552px;top:368.2px;width:44px;height:18px;overflow:hidden">
<span class="t" style="left:1.0px;top:0.9px;font-size:10.6px;letter-spacing:-0.23px;color:#222;-webkit-text-stroke:0.08px;">15.02.2017</span>
</div>
<span class="t" style="left:1269.4px;top:388.1px;font-size:10.6px;letter-spacing:0.41px;color:#222;-webkit-text-stroke:0.08px;">OrderTracki...</span>
<span class="t" style="left:1397.6px;top:388.1px;font-size:10.6px;letter-spacing:-0.07px;color:#222;-webkit-text-stroke:0.08px;">1.365 KB</span>
<span class="t" style="left:1453.3px;top:388.1px;font-size:10.6px;letter-spacing:0.31px;color:#222;-webkit-text-stroke:0.08px;">FlexPro Projekt...</span>
<div class="r" style="left:1552px;top:387.2px;width:44px;height:18px;overflow:hidden">
<span class="t" style="left:1.0px;top:0.9px;font-size:10.6px;letter-spacing:-0.23px;color:#222;-webkit-text-stroke:0.08px;">15.02.2017</span>
</div>
<span class="t" style="left:1269.4px;top:407.1px;font-size:10.6px;letter-spacing:0.33px;color:#222;-webkit-text-stroke:0.08px;">Series Analy...</span>
<span class="t" style="left:1397.6px;top:407.1px;font-size:10.6px;letter-spacing:-0.07px;color:#222;-webkit-text-stroke:0.08px;">1.149 KB</span>
<span class="t" style="left:1453.3px;top:407.1px;font-size:10.6px;letter-spacing:0.31px;color:#222;-webkit-text-stroke:0.08px;">FlexPro Projekt...</span>
<div class="r" style="left:1552px;top:406.2px;width:44px;height:18px;overflow:hidden">
<span class="t" style="left:1.0px;top:0.9px;font-size:10.6px;letter-spacing:-0.23px;color:#222;-webkit-text-stroke:0.08px;">15.02.2017</span>
</div>
<span class="t" style="left:1269.4px;top:426.1px;font-size:10.6px;letter-spacing:-0.32px;color:#222;-webkit-text-stroke:0.08px;">SPC.FPD</span>
<span class="t" style="left:1406.3px;top:426.1px;font-size:10.6px;letter-spacing:-0.07px;color:#222;-webkit-text-stroke:0.08px;">509 KB</span>
<span class="t" style="left:1453.3px;top:426.1px;font-size:10.6px;letter-spacing:0.31px;color:#222;-webkit-text-stroke:0.08px;">FlexPro Projekt...</span>
<div class="r" style="left:1552px;top:425.2px;width:44px;height:18px;overflow:hidden">
<span class="t" style="left:1.0px;top:0.9px;font-size:10.6px;letter-spacing:-0.23px;color:#222;-webkit-text-stroke:0.08px;">15.02.2017</span>
</div>
<span class="t" style="left:1269.4px;top:445.1px;font-size:10.6px;letter-spacing:0.38px;color:#222;-webkit-text-stroke:0.08px;">SpectralAnal...</span>
<span class="t" style="left:1406.3px;top:445.1px;font-size:10.6px;letter-spacing:-0.07px;color:#222;-webkit-text-stroke:0.08px;">349 KB</span>
<span class="t" style="left:1453.3px;top:445.1px;font-size:10.6px;letter-spacing:0.31px;color:#222;-webkit-text-stroke:0.08px;">FlexPro Projekt...</span>
<div class="r" style="left:1552px;top:444.2px;width:44px;height:18px;overflow:hidden">
<span class="t" style="left:1.0px;top:0.9px;font-size:10.6px;letter-spacing:-0.23px;color:#222;-webkit-text-stroke:0.08px;">15.02.2017</span>
</div>
<svg class="r" style="left:1250px;top:252px;" width="20" height="215" viewBox="1250 252 20 215"><rect x="1253.5" y="254.6" width="11.6" height="15" fill="#fbe08c" stroke="#efc95e" stroke-width="0.8"/><path d="M1265.1 269.6v-5.4h-1.6" fill="none" stroke="#efc95e" stroke-width="0.8"/><rect x="1253.5" y="273.6" width="11.6" height="15" fill="#fbe08c" stroke="#efc95e" stroke-width="0.8"/><path d="M1265.1 288.6v-5.4h-1.6" fill="none" stroke="#efc95e" stroke-width="0.8"/><rect x="1253.5" y="292.6" width="11.6" height="15" fill="#fbe08c" stroke="#efc95e" stroke-width="0.8"/><path d="M1265.1 307.6v-5.4h-1.6" fill="none" stroke="#efc95e" stroke-width="0.8"/><path d="M1253.5 311.8h7.5l4 4v10.5h-11.5z" fill="#fff" stroke="#8a8a8a" stroke-width="1"/><path d="M1261 311.8v4h4" fill="none" stroke="#8a8a8a" stroke-width="0.9"/><path d="M1253.5 330.8h7.5l4 4v10.5h-11.5z" fill="#fff" stroke="#8a8a8a" stroke-width="1"/><path d="M1261 330.8v4h4" fill="none" stroke="#8a8a8a" stroke-width="0.9"/><path d="M1253.5 349.8h7.5l4 4v10.5h-11.5z" fill="#fff" stroke="#8a8a8a" stroke-width="1"/><path d="M1261 349.8v4h4" fill="none" stroke="#8a8a8a" stroke-width="0.9"/><path d="M1253.5 368.8h7.5l4 4v10.5h-11.5z" fill="#fff" stroke="#8a8a8a" stroke-width="1"/><path d="M1261 368.8v4h4" fill="none" stroke="#8a8a8a" stroke-width="0.9"/><path d="M1253.5 387.8h7.5l4 4v10.5h-11.5z" fill="#fff" stroke="#8a8a8a" stroke-width="1"/><path d="M1261 387.8v4h4" fill="none" stroke="#8a8a8a" stroke-width="0.9"/><path d="M1253.5 406.8h7.5l4 4v10.5h-11.5z" fill="#fff" stroke="#8a8a8a" stroke-width="1"/><path d="M1261 406.8v4h4" fill="none" stroke="#8a8a8a" stroke-width="0.9"/><path d="M1253.5 425.8h7.5l4 4v10.5h-11.5z" fill="#fff" stroke="#8a8a8a" stroke-width="1"/><path d="M1261 425.8v4h4" fill="none" stroke="#8a8a8a" stroke-width="0.9"/><path d="M1253.5 444.8h7.5l4 4v10.5h-11.5z" fill="#fff" stroke="#8a8a8a" stroke-width="1"/><path d="M1261 444.8v4h4" fill="none" stroke="#8a8a8a" stroke-width="0.9"/></svg>
<div class="r" style="left:1247px;top:551px;width:350px;height:17px;background:#e6e6e6;"></div>
<div class="r" style="left:1247px;top:551.5px;width:17px;height:16px;background:#fdfdfd;border:1px solid #c9c9c9;box-sizing:border-box;"></div>
<svg class="r" style="left:1247px;top:551.5px;" width="17" height="16" viewBox="1247 551.5 17 16"><path d="M1258 555.5v8l-5 -4z" fill="#666"/></svg>
<div class="r" style="left:1580px;top:551.5px;width:17px;height:16px;background:#fdfdfd;border:1px solid #c9c9c9;box-sizing:border-box;"></div>
<svg class="r" style="left:1580px;top:551.5px;" width="17" height="16" viewBox="1580 551.5 17 16"><path d="M1586 555.5v8l5 -4z" fill="#666"/></svg>
<div class="r" style="left:1264px;top:551.5px;width:277px;height:16px;background:#fdfdfd;border:1px solid #c9c9c9;box-sizing:border-box;"></div>
<div class="r" style="left:1246px;top:568px;width:353px;height:5.5px;background:#cdcdcd;"></div>
<span class="t" style="left:1251.0px;top:577.1px;font-size:10.6px;letter-spacing:0.30px;color:#333;-webkit-text-stroke:0.08px;">Properties</span>
<svg class="r" style="left:1541px;top:577.5px;" width="52" height="16" viewBox="1541 577.5 52 16"><path d="M1582.2 582L1589.8 589M1589.8 582L1582.2 589" stroke="#5e5e5e" stroke-width="1.5"/><path d="M1565.5 581.1h4v5.2h-4zM1564.1 586.5h6.8M1567.5 586.5v3.6" fill="none" stroke="#5e5e5e" stroke-width="1.1"/><path d="M1569.1 581.1v5.2" stroke="#5e5e5e" stroke-width="2"/><path d="M1543.8 583.5h9.4l-4.7 5.2z" fill="#666"/></svg>
<div class="r" style="left:1247px;top:596px;width:350px;height:31px;background:#efefef;"></div>
<div class="r" style="left:1298px;top:601px;width:20px;height:20px;background:#d4d4d4;"></div>
<svg class="r" style="left:1255px;top:600px;" width="64" height="22" viewBox="1255 600 64 22"><path d="M1268 603.5V617.5M1265 614.5L1268 617.7L1271 614.5" fill="none" stroke="#555" stroke-width="1.2"/><rect x="1278.5" y="603.5" width="4.5" height="3.6" fill="#fff" stroke="#555" stroke-width="0.9"/><rect x="1278.5" y="613.5" width="4.5" height="3.6" fill="#fff" stroke="#555" stroke-width="0.9"/><rect x="1289" y="608.5" width="4.5" height="3.6" fill="#fff" stroke="#555" stroke-width="0.9"/><path d="M1283.5 605.3h2.5l3 3.5M1283.5 615.3h2.5l3 -3.5" fill="none" stroke="#4a7ebb" stroke-width="1.1"/><rect x="1301.5" y="605" width="12.5" height="3.8" fill="#fff" stroke="#666" stroke-width="0.9"/><rect x="1301.5" y="612" width="12.5" height="4.6" fill="none" stroke="#777" stroke-width="0.9" stroke-dasharray="2 1"/><path d="M1304 610.5L1311.5 618.5M1311.5 610.5L1304 618.5" stroke="#e0522c" stroke-width="1.2"/></svg>
<span class="t" style="left:1257.2px;top:600.3px;font-size:9.5px;letter-spacing:0.00px;color:#4a7ebb;font-weight:bold;-webkit-text-stroke:0;-webkit-text-stroke:0.08px;">A</span>
<span class="t" style="left:1257.4px;top:607.9px;font-size:9.5px;letter-spacing:0.00px;color:#9b59b6;font-weight:bold;-webkit-text-stroke:0;-webkit-text-stroke:0.08px;">Z</span>
<div class="r" style="left:1326px;top:599.5px;width:267px;height:23.5px;background:#fdfdfd;border:1px solid #d6d6d6;box-sizing:border-box;"></div>
<span class="t" style="left:1334.0px;top:603.1px;font-size:10.6px;letter-spacing:0.18px;color:#6a6a6a;-webkit-text-stroke:0.08px;">Search</span>
<svg class="r" style="left:1570px;top:602px;" width="20" height="20" viewBox="1570 602 20 20"><circle cx="1582.4" cy="609" r="4.6" fill="none" stroke="#3f78bd" stroke-width="1.7"/><path d="M1579.2 612.4L1575 616.4" stroke="#3f78bd" stroke-width="2.2"/></svg>
<div class="r" style="left:1246px;top:627px;width:334px;height:126px;background:#efefef;"></div>
<span class="t" style="left:1270.0px;top:627.7px;font-size:10.6px;letter-spacing:0.64px;color:#222;font-weight:bold;-webkit-text-stroke:0;-webkit-text-stroke:0.08px;">2D diagram</span>
<svg class="r" style="left:1252px;top:631px;" width="10" height="10" viewBox="1252 631 10 10"><path d="M1259 633v5.5h-5.5z" fill="#a6a6a6"/></svg>
<div class="r" style="left:1247px;top:627px;width:333px;height:126px;overflow:hidden">
<div class="r" style="left:19px;top:19px;width:156px;height:18px;background:#fdfdfd"></div><div class="r" style="left:176px;top:19px;width:157px;height:18px;background:#fdfdfd"></div>
<span class="t" style="left:23.5px;top:20.3px;font-size:10.6px;letter-spacing:1.21px;color:#222;-webkit-text-stroke:0.08px;">Name</span>
<span class="t" style="left:180.0px;top:20.3px;font-size:10.6px;letter-spacing:0.52px;color:#222;-webkit-text-stroke:0.08px;">EventIsolation</span>
<div class="r" style="left:19px;top:38px;width:156px;height:18px;background:#fdfdfd"></div><div class="r" style="left:176px;top:38px;width:157px;height:18px;background:#fdfdfd"></div>
<span class="t" style="left:23.5px;top:39.3px;font-size:10.6px;letter-spacing:0.63px;color:#222;-webkit-text-stroke:0.08px;">Category</span>
<div class="r" style="left:19px;top:57px;width:156px;height:18px;background:#fdfdfd"></div><div class="r" style="left:176px;top:57px;width:157px;height:18px;background:#fdfdfd"></div>
<span class="t" style="left:23.5px;top:58.3px;font-size:10.6px;letter-spacing:0.79px;color:#222;-webkit-text-stroke:0.08px;">Open</span>
<span class="t" style="left:180.0px;top:58.3px;font-size:10.6px;letter-spacing:0.50px;color:#222;-webkit-text-stroke:0.08px;">True</span>
<div class="r" style="left:19px;top:76px;width:156px;height:18px;background:#fdfdfd"></div><div class="r" style="left:176px;top:76px;width:157px;height:18px;background:#fdfdfd"></div>
<span class="t" style="left:23.5px;top:77.3px;font-size:10.6px;letter-spacing:0.79px;color:#222;-webkit-text-stroke:0.08px;">Write-protected</span>
<span class="t" style="left:180.0px;top:77.3px;font-size:10.6px;letter-spacing:-0.06px;color:#222;-webkit-text-stroke:0.08px;">False</span>
<div class="r" style="left:19px;top:95px;width:156px;height:18px;background:#fdfdfd"></div><div class="r" style="left:176px;top:95px;width:157px;height:18px;background:#fdfdfd"></div>
<span class="t" style="left:23.5px;top:96.3px;font-size:10.6px;letter-spacing:0.59px;color:#222;-webkit-text-stroke:0.08px;">Creation date</span>
<span class="t" style="left:180.0px;top:96.3px;font-size:10.6px;letter-spacing:0.06px;color:#222;-webkit-text-stroke:0.08px;">03.07.2008 13:08:22</span>
<div class="r" style="left:19px;top:114px;width:156px;height:18px;background:#fdfdfd"></div><div class="r" style="left:176px;top:114px;width:157px;height:18px;background:#fdfdfd"></div>
<span class="t" style="left:23.5px;top:115.3px;font-size:10.6px;letter-spacing:0.79px;color:#222;-webkit-text-stroke:0.08px;">Hyperlink</span>
<span class="t" style="left:180.0px;top:115.3px;font-size:10.6px;letter-spacing:0.52px;color:#222;-webkit-text-stroke:0.08px;">EventIsolation</span>
</div>
<div class="r" style="left:1580px;top:627px;width:17px;height:126px;background:#e6e6e6;"></div>
<div class="r" style="left:1580px;top:627px;width:17px;height:16px;background:#fdfdfd;border:1px solid #c9c9c9;box-sizing:border-box;"></div>
<svg class="r" style="left:1580px;top:627px;" width="17" height="16" viewBox="1580 627 17 16"><path d="M1584.5 637.5h8l-4 -5z" fill="#666"/></svg>
<div class="r" style="left:1580px;top:736.5px;width:17px;height:16px;background:#fdfdfd;border:1px solid #c9c9c9;box-sizing:border-box;"></div>
<svg class="r" style="left:1580px;top:736.5px;" width="17" height="16" viewBox="1580 736.5 17 16"><path d="M1584.5 742h8l-4 5z" fill="#666"/></svg>
<div class="r" style="left:1580px;top:644px;width:17px;height:8px;background:#fdfdfd;border:1px solid #c9c9c9;box-sizing:border-box;"></div>
<div class="r" style="left:1247px;top:753px;width:80px;height:22px;background:#fdfdfd;border:1px solid #a8a8a8;border-top:none;box-sizing:border-box;"></div>
<div class="r" style="left:1248px;top:771px;width:78px;height:3px;background:#c3d1f0;"></div>
<div class="r" style="left:1330.5px;top:771px;width:108.5px;height:3px;background:#ffd966;"></div>
<span class="t" style="left:1269.0px;top:754.5px;font-size:10.6px;letter-spacing:0.30px;color:#333;-webkit-text-stroke:0.08px;">Properties</span>
<span class="t" style="left:1350.0px;top:754.5px;font-size:10.6px;letter-spacing:0.47px;color:#333;-webkit-text-stroke:0.08px;">Object Hierarchy</span>
<svg class="r" style="left:1250px;top:755px;" width="100" height="18" viewBox="1250 755 100 18"><path d="M1254 767.5L1259.5 762" stroke="#555" stroke-width="2.4"/><path d="M1258 761.5A3.6 3.6 0 0 1 1262.5 757L1260.3 759.2L1261.6 761.2L1264 760.4A3.6 3.6 0 0 1 1258 761.5z" fill="#555"/><circle cx="1260.6" cy="760" r="3" fill="#555"/><path d="M1261 760.4L1264.5 757" stroke="#f7f7f7" stroke-width="1.8"/><rect x="1332.8" y="754.8" width="5.6" height="3.8" fill="#fff" stroke="#555" stroke-width="0.9"/><rect x="1340.6" y="759.8" width="5.6" height="3.8" fill="#fff" stroke="#555" stroke-width="0.9"/><rect x="1340.6" y="765.2" width="5.6" height="3.8" fill="#fff" stroke="#555" stroke-width="0.9"/><path d="M1335.4 758.6V767.2H1340.6M1335.4 761.8H1340.6" fill="none" stroke="#3f78bd" stroke-width="1"/></svg>
<div class="r" style="left:1246px;top:776px;width:353px;height:5.5px;background:#cdcdcd;"></div>
<span class="t" style="left:1251.0px;top:785.1px;font-size:10.6px;letter-spacing:0.13px;color:#333;-webkit-text-stroke:0.08px;">Preview</span>
<svg class="r" style="left:1541px;top:785.5px;" width="52" height="16" viewBox="1541 785.5 52 16"><path d="M1582.2 790L1589.8 797M1589.8 790L1582.2 797" stroke="#5e5e5e" stroke-width="1.5"/><path d="M1565.5 789.1h4v5.2h-4zM1564.1 794.5h6.8M1567.5 794.5v3.6" fill="none" stroke="#5e5e5e" stroke-width="1.1"/><path d="M1569.1 789.1v5.2" stroke="#5e5e5e" stroke-width="2"/><path d="M1543.8 791.5h9.4l-4.7 5.2z" fill="#666"/></svg>
<div class="r" style="left:1326px;top:840px;width:190.6px;height:79px;background:#fff;border:1px solid #f4f4f4;box-sizing:border-box;"></div>
<div class="r" style="left:1327px;top:841px;width:188.8px;height:77px;background:#fff;border:1px solid #000;box-sizing:border-box;"></div>
<svg class="r" style="left:1328px;top:842px;" width="188" height="75" viewBox="1328 842 188 75"><path d="M1383.2 845V911" stroke="#555" stroke-width="0.9"/><path d="M1421.0 845V911" stroke="#555" stroke-width="0.9"/><path d="M1458.7 845V911" stroke="#555" stroke-width="0.9"/><path d="M1496.4 845V911" stroke="#555" stroke-width="0.9"/><path d="M1345 861.4H1513.5" stroke="#666" stroke-width="0.9"/><path d="M1345 877.9H1513.5" stroke="#666" stroke-width="0.9"/><path d="M1345 894.4H1513.5" stroke="#666" stroke-width="0.9"/><rect x="1345.3" y="844.9" width="168.3" height="65.9" fill="none" stroke="#111" stroke-width="1.2"/><path d="M1345.3,874.7 L1346.0,874.6 L1356.7,873.8 L1368.2,873.0 L1378.7,872.5 L1389.5,872.2 L1399.9,872.1 L1410.1,872.2 L1420.8,872.6 L1431.5,873.3 L1441.8,873.9 L1452.4,874.7 L1462.9,875.4 L1473.4,876.1 L1483.9,876.6 L1494.5,876.9 L1503.6,877.1 L1513.6,876.9" fill="none" stroke="#0f7f7a" stroke-width="1.3"/><path d="M1345.3,875.1 L1345.7,874.2 L1346.0,872.7 L1346.3,870.8 L1346.7,868.7 L1347.0,866.3 L1347.3,864.0 L1347.7,861.8 L1348.0,859.9 L1348.3,858.5 L1348.7,857.6 L1349.0,857.3 L1349.3,857.5 L1349.7,858.0 L1350.0,858.8 L1350.3,859.6 L1350.7,860.4 L1351.0,860.9 L1351.3,861.1 L1351.7,861.0 L1352.0,860.6 L1352.4,860.1 L1352.7,859.7 L1353.1,859.6 L1353.4,859.7 L1353.7,859.9 L1354.1,860.2 L1354.4,860.6 L1354.8,861.0 L1355.1,861.2 L1355.4,861.3 L1355.8,861.2 L1356.1,861.0 L1356.5,860.7 L1356.8,860.5 L1357.1,860.3 L1357.5,860.2 L1357.8,860.2 L1358.2,860.3 L1358.5,860.5 L1358.9,860.6 L1359.2,860.7 L1359.6,860.8 L1359.9,860.7 L1360.3,860.7 L1360.6,860.5 L1361.0,860.4 L1361.3,860.4 L1361.7,860.3 L1362.0,860.4 L1362.4,860.4 L1362.7,860.5 L1363.1,860.6 L1363.5,860.6 L1363.8,860.6 L1364.2,860.6 L1364.5,860.6 L1364.8,860.5 L1365.1,860.5 L1365.5,860.4 L1365.8,860.4 L1366.1,860.5 L1366.4,860.6 L1366.8,861.3 L1367.1,863.4 L1367.5,866.8 L1367.8,871.1 L1368.1,876.0 L1368.5,881.1 L1368.8,886.1 L1369.1,890.4 L1369.5,893.7 L1369.8,895.9 L1370.2,896.6 L1370.5,896.1 L1370.8,894.8 L1371.2,892.9 L1371.5,891.1 L1371.9,889.7 L1372.2,889.2 L1372.6,889.4 L1372.9,889.9 L1373.2,890.6 L1373.5,891.3 L1373.9,891.8 L1374.2,892.0 L1374.5,891.8 L1374.9,891.2 L1375.3,890.4 L1375.6,889.6 L1376.0,889.1 L1376.3,888.9 L1376.6,889.0 L1377.0,889.3 L1377.3,889.7 L1377.6,890.2 L1377.9,890.6 L1378.3,890.9 L1378.6,891.0 L1378.9,890.9 L1379.3,890.7 L1379.6,890.4 L1380.0,890.1 L1380.3,889.9 L1380.7,889.8 L1381.0,889.8 L1381.4,890.0 L1381.7,890.2 L1382.0,890.4 L1382.4,890.6 L1382.7,890.6 L1383.1,890.6 L1383.4,890.4 L1383.8,890.3 L1384.1,890.1 L1384.4,890.0 L1384.8,890.0 L1385.1,890.0 L1385.5,890.1 L1385.9,890.2 L1386.2,890.3 L1386.6,890.4 L1386.9,890.4 L1387.3,890.3 L1387.7,890.2 L1388.1,889.4 L1388.4,886.8 L1388.8,882.8 L1389.1,877.7 L1389.4,872.1 L1389.8,866.5 L1390.1,861.5 L1390.4,857.5 L1390.8,854.9 L1391.1,854.0 L1391.4,854.4 L1391.8,855.5 L1392.1,857.0 L1392.4,858.6 L1392.7,860.1 L1393.1,861.2 L1393.4,861.5 L1393.7,861.4 L1394.0,860.9 L1394.3,860.2 L1394.7,859.5 L1395.0,859.0 L1395.3,858.9 L1395.7,859.1 L1396.0,859.6 L1396.4,860.3 L1396.8,861.1 L1397.1,861.6 L1397.5,861.8 L1397.9,861.7 L1398.2,861.3 L1398.6,860.9 L1398.9,860.4 L1399.3,860.0 L1399.7,859.9 L1400.0,860.0 L1400.4,860.2 L1400.7,860.4 L1401.0,860.7 L1401.4,860.9 L1401.7,861.0 L1402.1,860.9 L1402.4,860.8 L1402.7,860.6 L1403.1,860.4 L1403.4,860.3 L1403.7,860.2 L1404.1,860.3 L1404.4,860.3 L1404.7,860.4 L1405.0,860.5 L1405.3,860.6 L1405.7,860.7 L1406.0,860.7 L1406.3,860.7 L1406.7,860.6 L1407.0,860.5 L1407.3,860.5 L1407.7,860.4 L1408.0,860.4 L1408.3,860.5 L1408.6,860.5 L1408.9,861.3 L1409.2,863.4 L1409.6,866.8 L1409.9,871.1 L1410.2,876.0 L1410.6,881.1 L1410.9,886.1 L1411.3,890.4 L1411.6,893.7 L1411.9,895.9 L1412.3,896.6 L1412.6,896.1 L1413.0,894.8 L1413.3,892.9 L1413.7,891.1 L1414.0,889.7 L1414.3,889.2 L1414.7,889.4 L1415.0,889.9 L1415.3,890.6 L1415.7,891.3 L1416.0,891.8 L1416.3,892.0 L1416.7,891.8 L1417.0,891.2 L1417.4,890.4 L1417.7,889.6 L1418.1,889.1 L1418.4,888.9 L1418.8,889.0 L1419.1,889.3 L1419.4,889.7 L1419.7,890.2 L1420.1,890.6 L1420.4,890.9 L1420.7,891.0 L1421.1,890.9 L1421.4,890.7 L1421.8,890.4 L1422.1,890.1 L1422.4,889.9 L1422.8,889.8 L1423.1,889.8 L1423.5,890.0 L1423.8,890.2 L1424.2,890.4 L1424.5,890.6 L1424.8,890.6 L1425.2,890.6 L1425.5,890.4 L1425.9,890.3 L1426.2,890.1 L1426.6,890.0 L1426.9,890.0 L1427.3,890.0 L1427.6,890.1 L1428.0,890.2 L1428.3,890.3 L1428.7,890.4 L1429.0,890.4 L1429.4,890.3 L1429.9,890.2 L1430.2,889.4 L1430.5,886.8 L1430.9,882.8 L1431.2,877.7 L1431.5,872.1 L1431.9,866.5 L1432.2,861.5 L1432.5,857.5 L1432.9,854.9 L1433.2,854.0 L1433.5,854.4 L1433.8,855.5 L1434.2,857.0 L1434.5,858.6 L1434.8,860.1 L1435.1,861.2 L1435.4,861.5 L1435.8,861.4 L1436.1,860.9 L1436.4,860.2 L1436.7,859.5 L1437.1,859.0 L1437.4,858.9 L1437.8,859.1 L1438.1,859.6 L1438.5,860.3 L1438.8,861.1 L1439.2,861.6 L1439.6,861.8 L1439.9,861.7 L1440.3,861.3 L1440.7,860.9 L1441.0,860.4 L1441.4,860.0 L1441.7,859.9 L1442.1,860.0 L1442.4,860.2 L1442.8,860.4 L1443.1,860.7 L1443.5,860.9 L1443.8,861.0 L1444.1,860.9 L1444.5,860.8 L1444.8,860.6 L1445.1,860.4 L1445.5,860.3 L1445.8,860.2 L1446.1,860.3 L1446.5,860.3 L1446.8,860.4 L1447.1,860.5 L1447.4,860.6 L1447.7,860.7 L1448.1,860.7 L1448.4,860.7 L1448.7,860.6 L1449.1,860.5 L1449.4,860.5 L1449.7,860.4 L1450.1,860.4 L1450.3,860.5 L1450.6,860.5 L1451.0,861.3 L1451.3,863.4 L1451.6,866.8 L1452.0,871.1 L1452.3,876.0 L1452.7,881.1 L1453.0,886.1 L1453.3,890.4 L1453.7,893.7 L1454.0,895.9 L1454.3,896.6 L1454.7,896.1 L1455.0,894.8 L1455.4,892.9 L1455.7,891.1 L1456.1,889.7 L1456.4,889.2 L1456.7,889.4 L1457.1,889.9 L1457.4,890.6 L1457.7,891.3 L1458.1,891.8 L1458.4,892.0 L1458.7,891.8 L1459.1,891.2 L1459.4,890.4 L1459.8,889.6 L1460.1,889.1 L1460.5,888.9 L1460.8,889.0 L1461.2,889.3 L1461.5,889.7 L1461.8,890.2 L1462.1,890.6 L1462.5,890.9 L1462.8,891.0 L1463.1,890.9 L1463.5,890.7 L1463.8,890.4 L1464.2,890.1 L1464.5,889.9 L1464.9,889.8 L1465.2,889.8 L1465.5,890.0 L1465.9,890.2 L1466.2,890.4 L1466.6,890.6 L1466.9,890.6 L1467.3,890.6 L1467.6,890.4 L1467.9,890.3 L1468.3,890.1 L1468.6,890.0 L1469.0,890.0 L1469.3,890.0 L1469.7,890.1 L1470.0,890.2 L1470.4,890.3 L1470.8,890.4 L1471.1,890.4 L1471.5,890.3 L1471.9,890.2 L1472.3,889.4 L1472.6,886.8 L1472.9,882.8 L1473.2,877.7 L1473.6,872.1 L1473.9,866.5 L1474.2,861.5 L1474.6,857.5 L1474.9,854.9 L1475.2,854.0 L1475.5,854.4 L1475.9,855.5 L1476.2,857.0 L1476.5,858.6 L1476.8,860.1 L1477.1,861.2 L1477.5,861.5 L1477.8,861.4 L1478.1,860.9 L1478.4,860.2 L1478.8,859.5 L1479.1,859.0 L1479.4,858.9 L1479.8,859.1 L1480.1,859.6 L1480.5,860.3 L1480.9,861.1 L1481.2,861.6 L1481.6,861.8 L1482.0,861.7 L1482.3,861.3 L1482.7,860.9 L1483.0,860.4 L1483.4,860.0 L1483.8,859.9 L1484.1,860.0 L1484.4,860.2 L1484.8,860.4 L1485.1,860.7 L1485.5,860.9 L1485.8,861.0 L1486.2,860.9 L1486.5,860.8 L1486.8,860.6 L1487.2,860.4 L1487.5,860.3 L1487.8,860.2 L1488.2,860.3 L1488.5,860.3 L1488.8,860.4 L1489.1,860.5 L1489.4,860.6 L1489.8,860.7 L1490.1,860.7 L1490.4,860.7 L1490.7,860.6 L1491.1,860.5 L1491.4,860.5 L1491.7,860.4 L1492.1,860.4 L1492.4,860.5 L1492.7,860.5 L1493.0,861.3 L1493.3,863.4 L1493.7,866.8 L1494.0,871.1 L1494.3,876.0 L1494.7,881.1 L1495.0,886.1 L1495.4,890.4 L1495.7,893.7 L1496.0,895.9 L1496.4,896.6 L1496.7,896.1 L1497.1,894.8 L1497.4,892.9 L1497.7,891.1 L1498.1,889.7 L1498.4,889.2 L1498.8,889.4 L1499.1,889.9 L1499.4,890.6 L1499.8,891.3 L1500.1,891.8 L1500.4,892.0 L1500.8,891.8 L1501.1,891.2 L1501.5,890.4 L1501.8,889.6 L1502.2,889.1 L1502.5,888.9 L1502.9,889.0 L1503.2,889.3 L1503.5,889.7 L1503.8,890.2 L1504.2,890.6 L1504.5,890.9 L1504.8,891.0 L1505.2,890.9 L1505.5,890.7 L1505.8,890.4 L1506.2,890.1 L1506.5,889.9 L1506.9,889.8 L1507.2,889.8 L1507.6,890.0 L1507.9,890.2 L1508.3,890.4 L1508.6,890.6 L1508.9,890.6 L1509.3,890.6 L1509.6,890.4 L1510.0,890.3 L1510.3,890.1 L1510.7,890.0 L1511.0,890.0 L1511.4,890.0 L1511.7,890.1 L1512.1,890.2 L1512.4,890.3 L1512.8,890.4 L1513.1,890.4 L1513.5,890.3" fill="none" stroke="#2f86dc" stroke-width="1.2"/><rect x="1345.3" y="873.9" width="1.5" height="1.5" fill="#a00000"/><rect x="1367.5" y="872.3" width="1.5" height="1.5" fill="#a00000"/><rect x="1388.8" y="871.5" width="1.5" height="1.5" fill="#a00000"/><rect x="1409.4" y="871.5" width="1.5" height="1.5" fill="#a00000"/><rect x="1430.8" y="872.6" width="1.5" height="1.5" fill="#a00000"/><rect x="1451.7" y="874.0" width="1.5" height="1.5" fill="#a00000"/><rect x="1472.7" y="875.4" width="1.5" height="1.5" fill="#a00000"/><rect x="1493.8" y="876.2" width="1.5" height="1.5" fill="#a00000"/><rect x="1348.3" y="856.6" width="1.4" height="1.4" fill="#ff00ff"/><rect x="1390.4" y="853.3" width="1.4" height="1.4" fill="#ff00ff"/><rect x="1432.5" y="853.3" width="1.4" height="1.4" fill="#ff00ff"/><rect x="1474.5" y="853.3" width="1.4" height="1.4" fill="#ff00ff"/><path d="M1334.5 845v8" stroke="#9cc3ea" stroke-width="0.8"/><path d="M1336.6 849v4" stroke="#ff80ff" stroke-width="0.8"/><path d="M1338.7 848v5" stroke="#8cc" stroke-width="0.8"/><path d="M1340.8 846.5v6.5" stroke="#c88" stroke-width="0.8"/></svg>
<div class="r" style="left:1247px;top:956px;width:350px;height:1px;background:#d0d0d0;"></div>
<div class="r" style="left:1247px;top:956px;width:67px;height:22px;background:#fdfdfd;border:1px solid #a8a8a8;border-top:none;box-sizing:border-box;"></div>
<div class="r" style="left:1248px;top:974px;width:65px;height:3px;background:#c3d1f0;"></div>
<div class="r" style="left:1317px;top:974px;width:94px;height:3px;background:#ffd966;"></div>
<div class="r" style="left:1416px;top:974px;width:87px;height:3px;background:#b5cf9c;"></div>
<span class="t" style="left:1269.0px;top:957.1px;font-size:10.6px;letter-spacing:0.13px;color:#333;-webkit-text-stroke:0.08px;">Preview</span>
<span class="t" style="left:1337.0px;top:957.1px;font-size:10.6px;letter-spacing:0.37px;color:#333;-webkit-text-stroke:0.08px;">Dynamic Help</span>
<span class="t" style="left:1436.0px;top:957.1px;font-size:10.6px;letter-spacing:0.53px;color:#333;-webkit-text-stroke:0.08px;">Coordinates</span>
<svg class="r" style="left:1250px;top:956px;" width="190" height="18" viewBox="1250 956 190 18"><rect x="1251.5" y="958" width="14" height="12.5" fill="#fff" stroke="#777" stroke-width="1"/><rect x="1251" y="957.5" width="15" height="2.6" fill="#666"/><path d="M1253.5 965L1262 960.8C1260.5 963.5 1260.5 966.5 1262 969.2z" fill="#d9603b"/><circle cx="1326.8" cy="965" r="6" fill="#3a6fb5"/><rect x="1419.5" y="958.5" width="14" height="12.5" fill="#fff" stroke="#777" stroke-width="1"/><rect x="1419" y="958" width="15" height="2.4" fill="#666"/><rect x="1421.2" y="962.3" width="4.4" height="6.6" fill="#fff" stroke="#d9522c" stroke-width="1.2"/><path d="M1427.5 963h4.5M1427.5 965.6h4.5M1427.5 968.2h4.5" stroke="#4a7ebb" stroke-width="1" stroke-dasharray="1.6 0.8"/></svg>
<span class="t" style="left:1323.6px;top:957.5px;font-size:10.0px;letter-spacing:0.00px;color:#fff;font-weight:bold;-webkit-text-stroke:0;-webkit-text-stroke:0.08px;">?</span>
<span class="t" style="left:8.0px;top:721.1px;font-size:10.6px;letter-spacing:0.19px;color:#333;-webkit-text-stroke:0.08px;">Folders</span>
<svg class="r" style="left:187.5px;top:721.5px;" width="52" height="16" viewBox="187.5 721.5 52 16"><path d="M228.7 726L236.3 733M236.3 726L228.7 733" stroke="#5e5e5e" stroke-width="1.5"/><path d="M212 725.1h4v5.2h-4zM210.6 730.5h6.8M214 730.5v3.6" fill="none" stroke="#5e5e5e" stroke-width="1.1"/><path d="M215.6 725.1v5.2" stroke="#5e5e5e" stroke-width="2"/><path d="M190.3 727.5h9.4l-4.7 5.2z" fill="#666"/></svg>
<div class="r" style="left:3px;top:741px;width:241px;height:26px;background:#efefef;"></div>
<div class="r" style="left:29.5px;top:743px;width:210.5px;height:21.5px;background:#fdfdfd;border:1px solid #cfcfcf;box-sizing:border-box;"></div>
<span class="t" style="left:36.0px;top:745.7px;font-size:10.6px;letter-spacing:0.41px;color:#222;-webkit-text-stroke:0.08px;">(No activated subfolder)</span>
<svg class="r" style="left:5px;top:742px;" width="235" height="24" viewBox="5 742 235 24"><path d="M229.2 752.5h6l-3 3.2z" fill="#666"/><path d="M9.1 760.5V751.1h5l1.5 -1.6h6v3" fill="none" stroke="#ebc383" stroke-width="1.2"/><path d="M8.5 761.5l2.6 -7.6h13l-2.6 7.6z" fill="#ebc383"/><path d="M14 746.5h-3.5v5.5M10.5 747C14 747.5 15.4 750.5 13.5 753.5" fill="none" stroke="#4f9a7d" stroke-width="1.1"/></svg>
<div class="r" style="left:3px;top:767px;width:241px;height:211.5px;background:#fdfdfd;"></div>
<div class="r" style="left:44px;top:785px;width:28px;height:17.5px;background:#efefef;"></div>
<span class="t" style="left:27.0px;top:767.9px;font-size:10.6px;letter-spacing:0.55px;color:#333;-webkit-text-stroke:0.08px;">Project Database: &#x27;CreatingTemplates&#x27;</span>
<span class="t" style="left:46.0px;top:785.9px;font-size:10.6px;letter-spacing:0.20px;color:#333;-webkit-text-stroke:0.08px;">Data</span>
<span class="t" style="left:46.0px;top:803.9px;font-size:10.6px;letter-spacing:0.79px;color:#333;-webkit-text-stroke:0.08px;">Diagram Template</span>
<span class="t" style="left:46.0px;top:821.9px;font-size:10.6px;letter-spacing:0.92px;color:#333;-webkit-text-stroke:0.08px;">Document Template</span>
<span class="t" style="left:46.0px;top:839.9px;font-size:10.6px;letter-spacing:0.48px;color:#333;-webkit-text-stroke:0.08px;">Event Isolation</span>
<span class="t" style="left:46.0px;top:857.9px;font-size:10.6px;letter-spacing:0.58px;color:#333;-webkit-text-stroke:0.08px;">Further Measurements</span>
<span class="t" style="left:46.0px;top:875.9px;font-size:10.6px;letter-spacing:0.64px;color:#333;-webkit-text-stroke:0.08px;">Measurements</span>
<svg class="r" style="left:5px;top:767px;" width="40" height="125" viewBox="5 767 40 125"><path d="M25.6 798.4V789h5l1.5 -1.6h6v3" fill="none" stroke="#ebc383" stroke-width="1.2"/><path d="M25 799.4l2.6 -7.6h13l-2.6 7.6z" fill="#ebc383"/><path d="M25 806.8h6.4l1.6 -1.8h6v2.4" fill="none" stroke="#ebc383" stroke-width="1.1"/><path d="M25 807.2h14v10.4h-14z" fill="#ebc383"/><rect x="10.5" y="809.5" width="8" height="8" fill="#fdfdfd" stroke="#9a9a9a" stroke-width="1"/><path d="M12.5 813.5h4M14.5 811.5v4" stroke="#2b4f9e" stroke-width="1"/><path d="M25 824.8h6.4l1.6 -1.8h6v2.4" fill="none" stroke="#ebc383" stroke-width="1.1"/><path d="M25 825.2h14v10.4h-14z" fill="#ebc383"/><rect x="10.5" y="827.5" width="8" height="8" fill="#fdfdfd" stroke="#9a9a9a" stroke-width="1"/><path d="M12.5 831.5h4M14.5 829.5v4" stroke="#2b4f9e" stroke-width="1"/><path d="M25 842.8h6.4l1.6 -1.8h6v2.4" fill="none" stroke="#ebc383" stroke-width="1.1"/><path d="M25 843.2h14v10.4h-14z" fill="#ebc383"/><path d="M25 860.8h6.4l1.6 -1.8h6v2.4" fill="none" stroke="#ebc383" stroke-width="1.1"/><path d="M25 861.2h14v10.4h-14z" fill="#ebc383"/><rect x="10.5" y="863.5" width="8" height="8" fill="#fdfdfd" stroke="#9a9a9a" stroke-width="1"/><path d="M12.5 867.5h4M14.5 865.5v4" stroke="#2b4f9e" stroke-width="1"/><path d="M25 878.8h6.4l1.6 -1.8h6v2.4" fill="none" stroke="#ebc383" stroke-width="1.1"/><path d="M25 879.2h14v10.4h-14z" fill="#ebc383"/><rect x="10.5" y="881.5" width="8" height="8" fill="#fdfdfd" stroke="#9a9a9a" stroke-width="1"/><path d="M12.5 885.5h4M14.5 883.5v4" stroke="#2b4f9e" stroke-width="1"/><path d="M8.2 779.6v2.4a6 2.2 0 0 0 12 0v-2.4z" fill="#ebc383"/><ellipse cx="14.2" cy="779.6" rx="6" ry="2.2" fill="#f3d6a6"/><path d="M8.2 775.4v2.4a6 2.2 0 0 0 12 0v-2.4z" fill="#ebc383"/><ellipse cx="14.2" cy="775.4" rx="6" ry="2.2" fill="#f3d6a6"/><path d="M8.2 771.2v2.4a6 2.2 0 0 0 12 0v-2.4z" fill="#ebc383"/><ellipse cx="14.2" cy="771.2" rx="6" ry="2.2" fill="#f3d6a6"/><ellipse cx="14.2" cy="771.2" rx="6" ry="2.2" fill="#ebc383"/></svg>
<span class="t" style="left:254.0px;top:721.1px;font-size:10.6px;letter-spacing:0.44px;color:#333;-webkit-text-stroke:0.08px;">Object List</span>
<svg class="r" style="left:1185px;top:721.5px;" width="52" height="16" viewBox="1185 721.5 52 16"><path d="M1226.2 726L1233.8 733M1233.8 726L1226.2 733" stroke="#5e5e5e" stroke-width="1.5"/><path d="M1209.5 725.1h4v5.2h-4zM1208.1 730.5h6.8M1211.5 730.5v3.6" fill="none" stroke="#5e5e5e" stroke-width="1.1"/><path d="M1213.1 725.1v5.2" stroke="#5e5e5e" stroke-width="2"/><path d="M1187.8 727.5h9.4l-4.7 5.2z" fill="#666"/></svg>
<div class="r" style="left:250px;top:741px;width:991px;height:215px;background:#fdfdfd;border:1px solid #bdbdbd;box-sizing:border-box;"></div>
<div class="r" style="left:251px;top:742px;width:972px;height:23px;background:#f1f1f1;border-bottom:1px solid #d0d0d0;box-sizing:border-box;"></div>
<div class="r" style="left:390px;top:743px;width:2px;height:21px;background:#d4d4d4;"></div>
<div class="r" style="left:590px;top:743px;width:2px;height:21px;background:#d4d4d4;"></div>
<div class="r" style="left:670px;top:743px;width:2px;height:21px;background:#d4d4d4;"></div>
<div class="r" style="left:790px;top:743px;width:2px;height:21px;background:#d4d4d4;"></div>
<span class="t" style="left:256.0px;top:745.8px;font-size:10.6px;letter-spacing:0.24px;color:#333;-webkit-text-stroke:0.08px;">Name</span>
<span class="t" style="left:396.0px;top:745.8px;font-size:10.6px;letter-spacing:0.32px;color:#333;-webkit-text-stroke:0.08px;">Comments</span>
<span class="t" style="left:596.0px;top:745.8px;font-size:10.6px;letter-spacing:-0.16px;color:#333;-webkit-text-stroke:0.08px;">Type</span>
<span class="t" style="left:676.0px;top:745.8px;font-size:10.6px;letter-spacing:0.69px;color:#333;-webkit-text-stroke:0.08px;">Changed on</span>
<span class="t" style="left:796.0px;top:745.8px;font-size:10.6px;letter-spacing:0.58px;color:#333;-webkit-text-stroke:0.08px;">Contents</span>
<div class="r" style="left:271px;top:880px;width:79px;height:18.5px;background:#efefef;"></div>
<span class="t" style="left:273.2px;top:768.1px;font-size:10.6px;letter-spacing:0.54px;color:#111;-webkit-text-stroke:0.08px;">Current1</span>
<span class="t" style="left:597.0px;top:768.1px;font-size:10.6px;letter-spacing:0.19px;color:#3a3a3a;-webkit-text-stroke:0.08px;">Data Set</span>
<span class="t" style="left:677.0px;top:768.1px;font-size:10.6px;letter-spacing:0.11px;color:#3a3a3a;-webkit-text-stroke:0.08px;">15.02.2017 12:38:20</span>
<span class="t" style="left:797.0px;top:768.1px;font-size:10.6px;letter-spacing:0.64px;color:#3a3a3a;-webkit-text-stroke:0.08px;">Signal with 4,578 32-bit floating point points [mA, ]</span>
<span class="t" style="left:273.2px;top:787.1px;font-size:10.6px;letter-spacing:0.59px;color:#111;-webkit-text-stroke:0.08px;">UltrasoundSignal2</span>
<span class="t" style="left:597.0px;top:787.1px;font-size:10.6px;letter-spacing:0.19px;color:#3a3a3a;-webkit-text-stroke:0.08px;">Data Set</span>
<span class="t" style="left:677.0px;top:787.1px;font-size:10.6px;letter-spacing:0.16px;color:#3a3a3a;-webkit-text-stroke:0.08px;">02.02.2011 13:23:39</span>
<span class="t" style="left:797.0px;top:787.1px;font-size:10.6px;letter-spacing:0.61px;color:#3a3a3a;-webkit-text-stroke:0.08px;">Signal with 4,578 32-bit floating point points [V, ]</span>
<span class="t" style="left:273.2px;top:806.1px;font-size:10.6px;letter-spacing:0.61px;color:#111;-webkit-text-stroke:0.08px;">Current2</span>
<span class="t" style="left:597.0px;top:806.1px;font-size:10.6px;letter-spacing:0.19px;color:#3a3a3a;-webkit-text-stroke:0.08px;">Data Set</span>
<span class="t" style="left:677.0px;top:806.1px;font-size:10.6px;letter-spacing:0.16px;color:#3a3a3a;-webkit-text-stroke:0.08px;">02.02.2011 13:23:39</span>
<span class="t" style="left:797.0px;top:806.1px;font-size:10.6px;letter-spacing:0.64px;color:#3a3a3a;-webkit-text-stroke:0.08px;">Signal with 4,578 32-bit floating point points [mA, ]</span>
<span class="t" style="left:273.2px;top:825.1px;font-size:10.6px;letter-spacing:0.53px;color:#111;-webkit-text-stroke:0.08px;">Rectangle</span>
<span class="t" style="left:597.0px;top:825.1px;font-size:10.6px;letter-spacing:0.52px;color:#3a3a3a;-webkit-text-stroke:0.08px;">2D Diagram</span>
<span class="t" style="left:677.0px;top:825.1px;font-size:10.6px;letter-spacing:0.16px;color:#3a3a3a;-webkit-text-stroke:0.08px;">15.02.2017 12:40:11</span>
<span class="t" style="left:797.0px;top:825.1px;font-size:10.6px;letter-spacing:0.46px;color:#3a3a3a;-webkit-text-stroke:0.08px;">RectangleSignal</span>
<span class="t" style="left:273.2px;top:844.1px;font-size:10.6px;letter-spacing:0.69px;color:#111;-webkit-text-stroke:0.08px;">Ultrasound</span>
<span class="t" style="left:597.0px;top:844.1px;font-size:10.6px;letter-spacing:0.52px;color:#3a3a3a;-webkit-text-stroke:0.08px;">2D Diagram</span>
<span class="t" style="left:677.0px;top:844.1px;font-size:10.6px;letter-spacing:0.16px;color:#3a3a3a;-webkit-text-stroke:0.08px;">15.02.2017 12:40:11</span>
<span class="t" style="left:797.0px;top:844.1px;font-size:10.6px;letter-spacing:0.51px;color:#3a3a3a;-webkit-text-stroke:0.08px;">UltrasoundSignal1</span>
<span class="t" style="left:273.2px;top:863.1px;font-size:10.6px;letter-spacing:0.53px;color:#111;-webkit-text-stroke:0.08px;">Voltage2</span>
<span class="t" style="left:597.0px;top:863.1px;font-size:10.6px;letter-spacing:0.19px;color:#3a3a3a;-webkit-text-stroke:0.08px;">Data Set</span>
<span class="t" style="left:677.0px;top:863.1px;font-size:10.6px;letter-spacing:0.11px;color:#3a3a3a;-webkit-text-stroke:0.08px;">15.02.2017 12:38:50</span>
<span class="t" style="left:797.0px;top:863.1px;font-size:10.6px;letter-spacing:0.61px;color:#3a3a3a;-webkit-text-stroke:0.08px;">Signal with 4,578 64-bit floating point points [V, ]</span>
<span class="t" style="left:273.2px;top:882.1px;font-size:10.6px;letter-spacing:0.53px;color:#111;-webkit-text-stroke:0.08px;">EventIsolation</span>
<span class="t" style="left:597.0px;top:882.1px;font-size:10.6px;letter-spacing:0.52px;color:#3a3a3a;-webkit-text-stroke:0.08px;">2D Diagram</span>
<span class="t" style="left:677.0px;top:882.1px;font-size:10.6px;letter-spacing:0.11px;color:#3a3a3a;-webkit-text-stroke:0.08px;">20.02.2017 13:58:12</span>
<span class="t" style="left:797.0px;top:882.1px;font-size:10.6px;letter-spacing:0.52px;color:#3a3a3a;-webkit-text-stroke:0.08px;">RectangleSignal, Maxima, Threshold, Intersections</span>
<span class="t" style="left:273.2px;top:901.1px;font-size:10.6px;letter-spacing:0.58px;color:#111;-webkit-text-stroke:0.08px;">Intersections</span>
<span class="t" style="left:597.0px;top:901.1px;font-size:10.6px;letter-spacing:0.77px;color:#3a3a3a;-webkit-text-stroke:0.08px;">Formula</span>
<span class="t" style="left:677.0px;top:901.1px;font-size:10.6px;letter-spacing:0.11px;color:#3a3a3a;-webkit-text-stroke:0.08px;">20.02.2017 13:57:56</span>
<span class="t" style="left:797.0px;top:901.1px;font-size:10.6px;letter-spacing:0.69px;color:#3a3a3a;-webkit-text-stroke:0.08px;">Signal with 8 64-bit floating point points</span>
<span class="t" style="left:273.2px;top:920.1px;font-size:10.6px;letter-spacing:0.88px;color:#111;-webkit-text-stroke:0.08px;">Maxima</span>
<span class="t" style="left:597.0px;top:920.1px;font-size:10.6px;letter-spacing:0.23px;color:#3a3a3a;-webkit-text-stroke:0.08px;">Event Isola...</span>
<span class="t" style="left:677.0px;top:920.1px;font-size:10.6px;letter-spacing:0.11px;color:#3a3a3a;-webkit-text-stroke:0.08px;">20.02.2017 13:57:56</span>
<span class="t" style="left:797.0px;top:920.1px;font-size:10.6px;letter-spacing:0.69px;color:#3a3a3a;-webkit-text-stroke:0.08px;">Signal with 4 64-bit floating point points</span>
<svg class="r" style="left:253px;top:766px;" width="20" height="175" viewBox="253 766 20 175"><path d="M255 774.4L263.4 771C264.6 770.4 265.2 769 265.6 767.6C266 771.4 267.5 773.4 270 774.4C267.5 775.4 266 777.4 265.6 781.2C265.2 779.8 264.6 778.4 263.4 777.8z" fill="#d9603b"/><path d="M255 793.4L263.4 790C264.6 789.4 265.2 788 265.6 786.6C266 790.4 267.5 792.4 270 793.4C267.5 794.4 266 796.4 265.6 800.2C265.2 798.8 264.6 797.4 263.4 796.8z" fill="#d9603b"/><path d="M255 812.4L263.4 809C264.6 808.4 265.2 807 265.6 805.6C266 809.4 267.5 811.4 270 812.4C267.5 813.4 266 815.4 265.6 819.2C265.2 817.8 264.6 816.4 263.4 815.8z" fill="#d9603b"/><path d="M255.5 824.4V838.1H270.8" fill="none" stroke="#666" stroke-width="1"/><path d="M258.7 832.1L262.5 826.8L268.3 832.6" fill="none" stroke="#444" stroke-width="0.9"/><path d="M258.5 834.8L262.5 834.8L268.5 826.8" fill="none" stroke="#444" stroke-width="0.9"/><rect x="257.45" y="830.85" width="2.5" height="2.5" fill="#ebb55e"/><rect x="261.25" y="825.55" width="2.5" height="2.5" fill="#ebb55e"/><rect x="267.05" y="831.35" width="2.5" height="2.5" fill="#ebb55e"/><rect x="257.25" y="833.55" width="2.5" height="2.5" fill="#3f78bd"/><rect x="261.25" y="833.55" width="2.5" height="2.5" fill="#3f78bd"/><rect x="267.25" y="825.55" width="2.5" height="2.5" fill="#3f78bd"/><path d="M255.5 843.4V857.1H270.8" fill="none" stroke="#666" stroke-width="1"/><path d="M258.7 851.1L262.5 845.8L268.3 851.6" fill="none" stroke="#444" stroke-width="0.9"/><path d="M258.5 853.8L262.5 853.8L268.5 845.8" fill="none" stroke="#444" stroke-width="0.9"/><rect x="257.45" y="849.85" width="2.5" height="2.5" fill="#ebb55e"/><rect x="261.25" y="844.55" width="2.5" height="2.5" fill="#ebb55e"/><rect x="267.05" y="850.35" width="2.5" height="2.5" fill="#ebb55e"/><rect x="257.25" y="852.55" width="2.5" height="2.5" fill="#3f78bd"/><rect x="261.25" y="852.55" width="2.5" height="2.5" fill="#3f78bd"/><rect x="267.25" y="844.55" width="2.5" height="2.5" fill="#3f78bd"/><path d="M255 869.4L263.4 866C264.6 865.4 265.2 864 265.6 862.6C266 866.4 267.5 868.4 270 869.4C267.5 870.4 266 872.4 265.6 876.2C265.2 874.8 264.6 873.4 263.4 872.8z" fill="#d9603b"/><path d="M255.5 881.4V895.1H270.8" fill="none" stroke="#666" stroke-width="1"/><path d="M258.7 889.1L262.5 883.8L268.3 889.6" fill="none" stroke="#444" stroke-width="0.9"/><path d="M258.5 891.8L262.5 891.8L268.5 883.8" fill="none" stroke="#444" stroke-width="0.9"/><rect x="257.45" y="887.85" width="2.5" height="2.5" fill="#ebb55e"/><rect x="261.25" y="882.55" width="2.5" height="2.5" fill="#ebb55e"/><rect x="267.05" y="888.35" width="2.5" height="2.5" fill="#ebb55e"/><rect x="257.25" y="890.55" width="2.5" height="2.5" fill="#3f78bd"/><rect x="261.25" y="890.55" width="2.5" height="2.5" fill="#3f78bd"/><rect x="267.25" y="882.55" width="2.5" height="2.5" fill="#3f78bd"/><path d="M255.8 920.2v14h14" fill="none" stroke="#3f78bd" stroke-width="1"/><circle cx="264" cy="925.8" r="4.4" fill="#fff" stroke="#777" stroke-width="1.2"/><path d="M267.2 929.2l3.4 3.6" stroke="#777" stroke-width="1.8"/><path d="M261.5 926.2l1.5 -2l1.5 3.5l1.6 -3" fill="none" stroke="#2e8b57" stroke-width="0.9"/></svg>
<span class="t" style="left:255.5px;top:896.6px;font-size:19.0px;letter-spacing:0.00px;color:#3f78bd;font-family:'DejaVu Sans',sans-serif;-webkit-text-stroke:0.08px;">π</span>
<div class="r" style="left:1223px;top:742px;width:17px;height:213px;background:#e6e6e6;"></div>
<div class="r" style="left:1223px;top:742px;width:17px;height:16px;background:#fdfdfd;border:1px solid #c9c9c9;box-sizing:border-box;"></div>
<svg class="r" style="left:1223px;top:742px;" width="17" height="16" viewBox="1223 742 17 16"><path d="M1227.5 752.5h8l-4 -5z" fill="#666"/></svg>
<div class="r" style="left:1223px;top:939px;width:17px;height:16px;background:#fdfdfd;border:1px solid #c9c9c9;box-sizing:border-box;"></div>
<svg class="r" style="left:1223px;top:939px;" width="17" height="16" viewBox="1223 939 17 16"><path d="M1227.5 944.5h8l-4 5z" fill="#666"/></svg>
<div class="r" style="left:1223px;top:830px;width:17px;height:109px;background:#fdfdfd;border:1px solid #c9c9c9;box-sizing:border-box;"></div>
<div class="r" style="left:250px;top:956px;width:82px;height:22px;background:#fdfdfd;border:1px solid #a8a8a8;border-top:none;box-sizing:border-box;"></div>
<div class="r" style="left:251px;top:974px;width:80px;height:3px;background:#c3d1f0;"></div>
<div class="r" style="left:335px;top:974px;width:74px;height:3px;background:#ffd966;"></div>
<div class="r" style="left:413.7px;top:974px;width:57.5px;height:3px;background:#c9b3e6;"></div>
<span class="t" style="left:272.5px;top:957.1px;font-size:10.6px;letter-spacing:0.39px;color:#333;-webkit-text-stroke:0.08px;">Object List</span>
<span class="t" style="left:355.0px;top:957.1px;font-size:10.6px;letter-spacing:0.22px;color:#333;-webkit-text-stroke:0.08px;">Event Log</span>
<span class="t" style="left:434.0px;top:957.1px;font-size:10.6px;letter-spacing:0.71px;color:#333;-webkit-text-stroke:0.08px;">Watch</span>
<svg class="r" style="left:252px;top:956px;" width="182" height="18" viewBox="252 956 182 18"><path d="M254.6 970V960.6h5l1.5 -1.6h6v3" fill="none" stroke="#ebc383" stroke-width="1.2"/><path d="M254 971l2.6 -7.6h13l-2.6 7.6z" fill="#ebc383"/><circle cx="344.5" cy="965" r="6" fill="#3a6fb5"/><rect x="343.6" y="963.8" width="1.9" height="4.6" fill="#fff"/><rect x="343.6" y="961" width="1.9" height="1.8" fill="#fff"/><rect x="417.5" y="958" width="12" height="8" fill="#fff" stroke="#888" stroke-width="0.9" stroke-dasharray="1.4 0.8"/><circle cx="420.4" cy="969" r="2.6" fill="none" stroke="#333" stroke-width="1.3"/><circle cx="427.6" cy="969" r="2.6" fill="none" stroke="#333" stroke-width="1.3"/><path d="M419 966.5l1.6 -4h6.8l1.6 4M423 969h2" fill="none" stroke="#333" stroke-width="1.2"/></svg>
<div class="r" style="left:1px;top:979px;width:1598px;height:1px;background:#cdcdcd;"></div>
<div class="r" style="left:1px;top:980px;width:1598px;height:22px;background:#f1f1f1;"></div>
<span class="t" style="left:12.0px;top:983.2px;font-size:10.6px;letter-spacing:-0.41px;color:#333;-webkit-text-stroke:0.08px;">Ready</span>
<span class="t" style="left:1395.5px;top:984.1px;font-size:10.6px;letter-spacing:-0.12px;color:#222;-webkit-text-stroke:0.08px;">1/1</span>
<svg class="r" style="left:1320px;top:982px;" width="276" height="18" viewBox="1320 982 276 18"><path d="M1450.5 991.5h8" stroke="#b0b0b0" stroke-width="1.6"/><path d="M1468 991.5h87" stroke="#a8a8a8" stroke-width="1"/><rect x="1509.2" y="984.5" width="4.4" height="13.5" fill="#a6a6a6" stroke="#c4c4c4" stroke-width="0.6"/><path d="M1565.5 991.8h8M1569.5 987.8v8" stroke="#9c9c9c" stroke-width="2"/><rect x="1590" y="989" width="1.8" height="1.8" fill="#b4b4b4"/><rect x="1587" y="992" width="1.8" height="1.8" fill="#b4b4b4"/><rect x="1590" y="992" width="1.8" height="1.8" fill="#b4b4b4"/><rect x="1584" y="995" width="1.8" height="1.8" fill="#b4b4b4"/><rect x="1587" y="995" width="1.8" height="1.8" fill="#b4b4b4"/><rect x="1590" y="995" width="1.8" height="1.8" fill="#b4b4b4"/><circle cx="1330" cy="987.5" r="2.2" fill="none" stroke="#d0d0d0" stroke-width="0.8"/><rect x="1330.5" y="988.5" width="9" height="9" fill="#f6f6f6" stroke="#e2e2e2" stroke-width="0.6"/></svg>
</body></html>
